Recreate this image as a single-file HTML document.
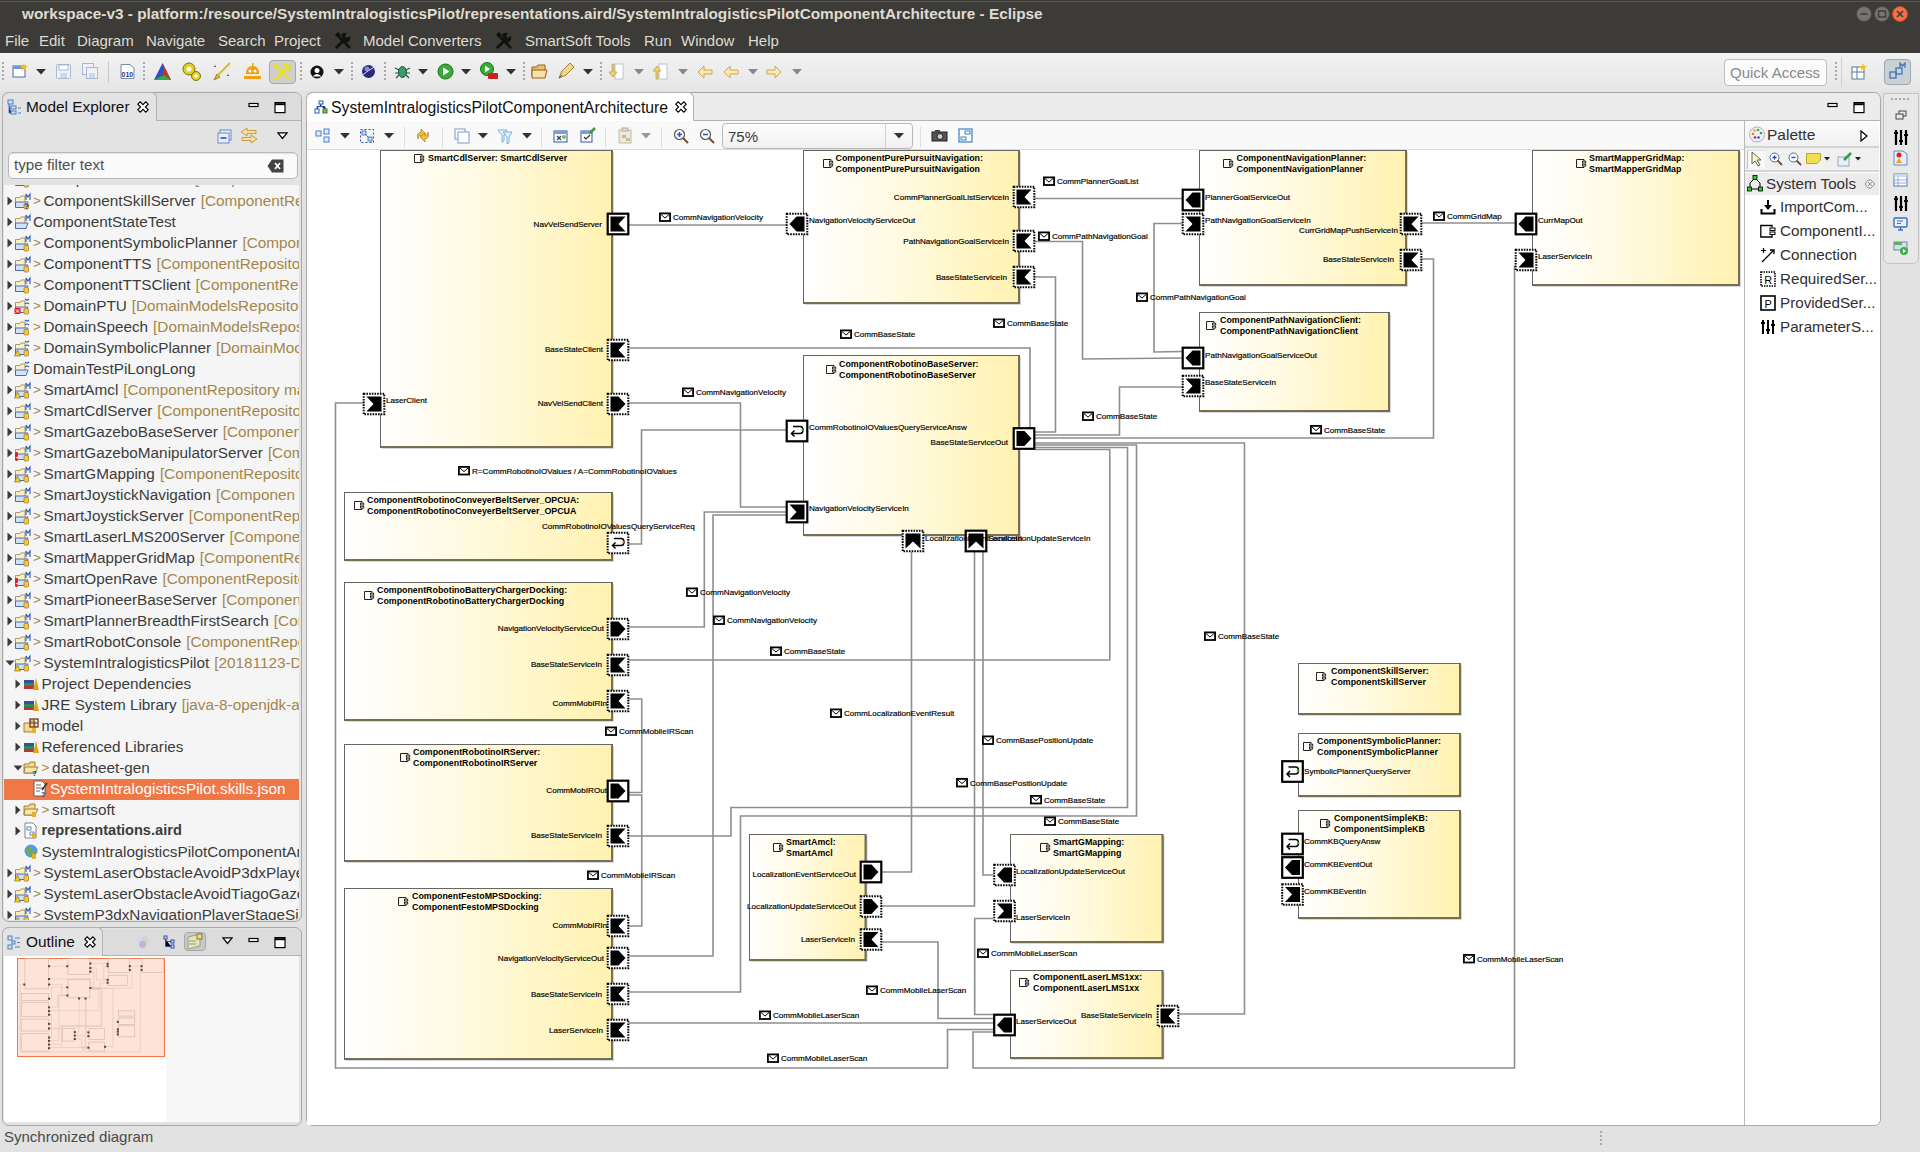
<!DOCTYPE html>
<html><head><meta charset="utf-8">
<style>
*{box-sizing:border-box;margin:0;padding:0}
html,body{width:1920px;height:1152px;overflow:hidden;background:#e2e2e2;font-family:"Liberation Sans",sans-serif;position:relative}
.a{position:absolute}
.t{position:absolute;white-space:nowrap}
</style></head><body>
<div class="a" style="left:0px;top:0px;width:1920px;height:53px;background:#3c3b37"></div>
<div class="a" style="left:0px;top:1px;width:1920px;height:1px;background:#58574f"></div>
<div class="t" style="left:22px;top:4.8px;font-size:15.35px;line-height:18.4px;color:#dfdbd2;font-weight:bold;">workspace-v3 - platform:/resource/SystemIntralogisticsPilot/representations.aird/SystemIntralogisticsPilotComponentArchitecture - Eclipse</div>
<svg class="a" style="left:1855px;top:5px;" width="60" height="18" viewBox="0 0 60 18"><circle cx="9" cy="9" r="7.5" fill="#77756f" stroke="#4a4945"/><path d="M5.5,9 H12.5" stroke="#3c3b37" stroke-width="1.6"/><circle cx="27" cy="9" r="7.5" fill="#77756f" stroke="#4a4945"/><rect x="23.5" y="6" width="7" height="6" fill="none" stroke="#3c3b37" stroke-width="1.4"/><circle cx="45" cy="9" r="7.5" fill="#f0714a" stroke="#c04a20"/><path d="M42,6 L48,12 M48,6 L42,12" stroke="#3c3b37" stroke-width="1.6"/></svg>
<div class="t" style="left:5px;top:31.5px;font-size:15px;line-height:18.0px;color:#dfdbd2;font-weight:normal;">File</div>
<div class="t" style="left:39px;top:31.5px;font-size:15px;line-height:18.0px;color:#dfdbd2;font-weight:normal;">Edit</div>
<div class="t" style="left:77px;top:31.5px;font-size:15px;line-height:18.0px;color:#dfdbd2;font-weight:normal;">Diagram</div>
<div class="t" style="left:146px;top:31.5px;font-size:15px;line-height:18.0px;color:#dfdbd2;font-weight:normal;">Navigate</div>
<div class="t" style="left:218px;top:31.5px;font-size:15px;line-height:18.0px;color:#dfdbd2;font-weight:normal;">Search</div>
<div class="t" style="left:274px;top:31.5px;font-size:15px;line-height:18.0px;color:#dfdbd2;font-weight:normal;">Project</div>
<div class="t" style="left:363px;top:31.5px;font-size:15px;line-height:18.0px;color:#dfdbd2;font-weight:normal;">Model Converters</div>
<div class="t" style="left:525px;top:31.5px;font-size:15px;line-height:18.0px;color:#dfdbd2;font-weight:normal;">SmartSoft Tools</div>
<div class="t" style="left:644px;top:31.5px;font-size:15px;line-height:18.0px;color:#dfdbd2;font-weight:normal;">Run</div>
<div class="t" style="left:681px;top:31.5px;font-size:15px;line-height:18.0px;color:#dfdbd2;font-weight:normal;">Window</div>
<div class="t" style="left:748px;top:31.5px;font-size:15px;line-height:18.0px;color:#dfdbd2;font-weight:normal;">Help</div>
<svg class="a" style="left:333px;top:31px;" width="19" height="19" viewBox="0 0 19 19"><path d="M3,17 L12,8" stroke="#111" stroke-width="3"/><path d="M8,4 Q10,1 14,2 L12,5 L14,7 L17,5 Q18,9 15,11 Q13,12 11,11Z" fill="#111"/><path d="M17,17 L6,6" stroke="#111" stroke-width="2.5"/><path d="M2,4 L5,1 L8,4 L5,7Z" fill="#111"/></svg>
<svg class="a" style="left:494px;top:31px;" width="19" height="19" viewBox="0 0 19 19"><path d="M3,17 L12,8" stroke="#111" stroke-width="3"/><path d="M8,4 Q10,1 14,2 L12,5 L14,7 L17,5 Q18,9 15,11 Q13,12 11,11Z" fill="#111"/><path d="M17,17 L6,6" stroke="#111" stroke-width="2.5"/><path d="M2,4 L5,1 L8,4 L5,7Z" fill="#111"/></svg>
<div class="a" style="left:0px;top:53px;width:1920px;height:38px;background:linear-gradient(#f2f2f2,#e6e6e6)"></div>
<div class="a" style="left:2px;top:62px;width:2px;height:20px;background:repeating-linear-gradient(#aaa 0 2px,transparent 2px 4px)"></div>
<div class="a" style="left:143px;top:62px;width:2px;height:20px;background:repeating-linear-gradient(#aaa 0 2px,transparent 2px 4px)"></div>
<div class="a" style="left:300px;top:62px;width:2px;height:20px;background:repeating-linear-gradient(#aaa 0 2px,transparent 2px 4px)"></div>
<div class="a" style="left:351px;top:62px;width:2px;height:20px;background:repeating-linear-gradient(#aaa 0 2px,transparent 2px 4px)"></div>
<div class="a" style="left:384px;top:62px;width:2px;height:20px;background:repeating-linear-gradient(#aaa 0 2px,transparent 2px 4px)"></div>
<div class="a" style="left:523px;top:62px;width:2px;height:20px;background:repeating-linear-gradient(#aaa 0 2px,transparent 2px 4px)"></div>
<div class="a" style="left:600px;top:62px;width:2px;height:20px;background:repeating-linear-gradient(#aaa 0 2px,transparent 2px 4px)"></div>
<div class="a" style="left:1835px;top:62px;width:2px;height:20px;background:repeating-linear-gradient(#aaa 0 2px,transparent 2px 4px)"></div>
<div class="a" style="left:108px;top:61px;width:1px;height:22px;background:#c8c8c8"></div>
<svg class="a" style="left:12px;top:63px;" width="16" height="16" viewBox="0 0 16 16"><rect x="1" y="3" width="12" height="11" fill="#fff" stroke="#4a6aa0"/><rect x="1" y="3" width="12" height="3" fill="#6a9ad8"/><path d="M12,0 L13,3 L16,3 L13.5,5 L14.5,8 L12,6 L9.5,8 L10.5,5 L8,3 L11,3Z" fill="#f0c020"/></svg>
<svg class="a" style="left:36px;top:69px;" width="10" height="6" viewBox="0 0 10 6"><path d="M0,0 H10 L5,5.5Z" fill="#333"/></svg>
<svg class="a" style="left:56px;top:64px;" width="15" height="15" viewBox="0 0 15 15"><rect x="0.5" y="0.5" width="14" height="14" rx="1" fill="#eef2f8" stroke="#a8b8d0"/><rect x="3" y="1" width="9" height="5" fill="#fff" stroke="#a8b8d0"/><rect x="4" y="9" width="7" height="5" fill="#d0d8e8"/></svg>
<svg class="a" style="left:82px;top:63px;" width="16" height="16" viewBox="0 0 16 16"><rect x="0.5" y="0.5" width="11" height="11" fill="#eef2f8" stroke="#a8b8d0"/><rect x="4.5" y="4.5" width="11" height="11" fill="#eef2f8" stroke="#a8b8d0"/><rect x="7" y="10" width="6" height="5" fill="#d0d8e8"/></svg>
<svg class="a" style="left:120px;top:64px;" width="15" height="15" viewBox="0 0 15 15"><path d="M1,0.5 H10 L14,4 V14.5 H1Z" fill="#fff" stroke="#7a8aa0"/><text x="1.5" y="13" font-size="7" font-weight="bold" fill="#1a3a80" font-family="Liberation Sans">010</text></svg>
<svg class="a" style="left:153px;top:62px;" width="19" height="19" viewBox="0 0 19 19"><path d="M9.5,1 L18,18 L1,18Z" fill="#3050c0"/><path d="M9.5,1 L18,18 L11,13Z" fill="#d03020"/><path d="M1,18 L18,18 L11,13Z" fill="#30b030"/></svg>
<svg class="a" style="left:181px;top:61px;" width="21" height="21" viewBox="0 0 21 21"><circle cx="8" cy="8" r="6" fill="#e0d020" stroke="#807010"/><circle cx="8" cy="8" r="2.5" fill="#fff"/><circle cx="15" cy="15" r="4.5" fill="#e0d020" stroke="#807010"/><circle cx="15" cy="15" r="1.8" fill="#fff"/></svg>
<svg class="a" style="left:211px;top:62px;" width="21" height="20" viewBox="0 0 21 20"><path d="M3,18 L6,12 L9,15Z" fill="#e0c020" stroke="#806010" stroke-width="0.7"/><path d="M7,13 L19,1" stroke="#d8c020" stroke-width="2"/><path d="M4,3 L5,5 L3,5Z M17,12 L18,14 L16,14Z" fill="#333"/></svg>
<svg class="a" style="left:242px;top:62px;" width="21" height="20" viewBox="0 0 21 20"><path d="M4,12 Q4,4 10.5,4 Q17,4 17,12Z" fill="#f0a010"/><rect x="2" y="14" width="17" height="3" fill="#f0a010"/><circle cx="8" cy="9" r="1.5" fill="#fff"/><circle cx="13" cy="9" r="1.5" fill="#fff"/><rect x="10" y="1" width="1.5" height="3" fill="#f0a010"/></svg>
<div class="a" style="left:269px;top:60px;width:27px;height:24px;background:#cfcfcf;border:1px solid #a8a8a8;border-radius:4px"></div>
<svg class="a" style="left:272px;top:62px;" width="21" height="20" viewBox="0 0 21 20"><path d="M3,18 L17,3" stroke="#e8e020" stroke-width="3"/><path d="M12,2 L19,8" stroke="#e8e020" stroke-width="3"/><path d="M3,3 L17,17" stroke="#e8e020" stroke-width="2.5"/><path d="M2,6 Q1,1 6,2 Z" fill="#e8e020"/></svg>
<svg class="a" style="left:310px;top:65px;" width="14" height="14" viewBox="0 0 14 14"><circle cx="7" cy="7" r="6.5" fill="#111"/><circle cx="7" cy="5.5" r="2.5" fill="#fff"/><path d="M2.5,11.5 Q7,6.5 11.5,11.5" fill="#fff"/></svg>
<svg class="a" style="left:334px;top:69px;" width="10" height="6" viewBox="0 0 10 6"><path d="M0,0 H10 L5,5.5Z" fill="#333"/></svg>
<svg class="a" style="left:361px;top:64px;" width="15" height="15" viewBox="0 0 15 15"><circle cx="7.5" cy="7.5" r="6.5" fill="#2a2a80"/><circle cx="6" cy="5" r="2.5" fill="#8a8ad8"/><path d="M0,12 Q8,6 15,2" stroke="#ddd" stroke-width="1"/></svg>
<svg class="a" style="left:394px;top:63px;" width="17" height="17" viewBox="0 0 17 17"><ellipse cx="8.5" cy="9" rx="4" ry="5.5" fill="#3a9a6a" stroke="#1a5a3a"/><path d="M1,5 L5,7 M16,5 L12,7 M1,10 H4.5 M16,10 H12.5 M2,15 L5,12 M15,15 L12,12" stroke="#1a5a3a" stroke-width="1.2"/></svg>
<svg class="a" style="left:418px;top:69px;" width="10" height="6" viewBox="0 0 10 6"><path d="M0,0 H10 L5,5.5Z" fill="#333"/></svg>
<svg class="a" style="left:437px;top:63px;" width="17" height="17" viewBox="0 0 17 17"><circle cx="8.5" cy="8.5" r="7.5" fill="#3aaa3a" stroke="#1a701a"/><path d="M6,4.5 L12.5,8.5 L6,12.5Z" fill="#fff"/></svg>
<svg class="a" style="left:461px;top:69px;" width="10" height="6" viewBox="0 0 10 6"><path d="M0,0 H10 L5,5.5Z" fill="#333"/></svg>
<svg class="a" style="left:480px;top:62px;" width="19" height="19" viewBox="0 0 19 19"><circle cx="7" cy="7" r="6.5" fill="#3aaa3a" stroke="#1a701a"/><path d="M5,3.5 L10,7 L5,10.5Z" fill="#fff"/><rect x="8" y="11" width="10" height="6" rx="1" fill="#d02020"/></svg>
<svg class="a" style="left:506px;top:69px;" width="10" height="6" viewBox="0 0 10 6"><path d="M0,0 H10 L5,5.5Z" fill="#333"/></svg>
<svg class="a" style="left:531px;top:64px;" width="17" height="15" viewBox="0 0 17 15"><path d="M1,3 H6 L7,1 H14 V13 H1Z" fill="#e8c070" stroke="#906020"/><path d="M1,6 H16 L14,14 H1Z" fill="#f8e0a0" stroke="#906020"/></svg>
<svg class="a" style="left:557px;top:62px;" width="18" height="18" viewBox="0 0 18 18"><path d="M2,16 L5,9 L13,1 L17,5 L9,13Z" fill="#f0d890" stroke="#a08030"/><path d="M2,16 L5,13" stroke="#555"/></svg>
<svg class="a" style="left:583px;top:69px;" width="10" height="6" viewBox="0 0 10 6"><path d="M0,0 H10 L5,5.5Z" fill="#333"/></svg>
<svg class="a" style="left:609px;top:63px;" width="15" height="17" viewBox="0 0 15 17"><rect x="6" y="1" width="8" height="15" fill="#fff" stroke="#b8c4d8"/><path d="M3,1 V9 H0 L4,14 L8,9 H5 V1Z" fill="#f0d070" stroke="#b09030" stroke-width="0.6"/></svg>
<svg class="a" style="left:634px;top:69px;" width="10" height="6" viewBox="0 0 10 6"><path d="M0,0 H10 L5,5.5Z" fill="#888"/></svg>
<svg class="a" style="left:653px;top:63px;" width="15" height="17" viewBox="0 0 15 17"><rect x="6" y="1" width="8" height="15" fill="#fff" stroke="#b8c4d8"/><path d="M3,16 V8 H0 L4,3 L8,8 H5 V16Z" fill="#f0d070" stroke="#b09030" stroke-width="0.6"/></svg>
<svg class="a" style="left:678px;top:69px;" width="10" height="6" viewBox="0 0 10 6"><path d="M0,0 H10 L5,5.5Z" fill="#888"/></svg>
<svg class="a" style="left:697px;top:65px;" width="16" height="14" viewBox="0 0 16 14"><path d="M15,5 H7 V1 L1,7 L7,13 V9 H15Z" fill="#f8e8b0" stroke="#c8a040" stroke-width="0.9"/></svg>
<svg class="a" style="left:723px;top:65px;" width="16" height="14" viewBox="0 0 16 14"><path d="M15,5 H7 V1 L1,7 L7,13 V9 H15Z" fill="#f8e8b0" stroke="#c8a040" stroke-width="0.9"/></svg>
<svg class="a" style="left:766px;top:65px;" width="16" height="14" viewBox="0 0 16 14"><path d="M1,5 H9 V1 L15,7 L9,13 V9 H1Z" fill="#f8e8b0" stroke="#c8a040" stroke-width="0.9"/></svg>
<svg class="a" style="left:748px;top:69px;" width="10" height="6" viewBox="0 0 10 6"><path d="M0,0 H10 L5,5.5Z" fill="#888"/></svg>
<svg class="a" style="left:792px;top:69px;" width="10" height="6" viewBox="0 0 10 6"><path d="M0,0 H10 L5,5.5Z" fill="#888"/></svg>
<div class="a" style="left:1724px;top:59px;width:103px;height:27px;background:#fbfbfb;border:1px solid #bdbdbd;border-radius:4px"></div>
<div class="t" style="left:1730px;top:63.5px;font-size:15px;line-height:18.0px;color:#8a8a8a;font-weight:normal;">Quick Access</div>
<div class="a" style="left:1841px;top:57px;width:1px;height:30px;background:#d0d0d0"></div>
<svg class="a" style="left:1851px;top:63px;" width="17" height="17" viewBox="0 0 17 17"><rect x="1" y="4" width="12" height="12" fill="#fff" stroke="#5a7aa0"/><path d="M1,9 H13 M6,4 V16" stroke="#5a7aa0"/><path d="M12,0 L13,3 L16,3 L13.5,5 L14.5,8 L12,6 L9.5,8 L10.5,5 L8,3 L11,3Z" fill="#f0c020"/></svg>
<div class="a" style="left:1884px;top:59px;width:27px;height:26px;background:#c8d0d8;border:1px solid #a0a8b0;border-radius:4px"></div>
<svg class="a" style="left:1888px;top:62px;" width="20" height="20" viewBox="0 0 20 20"><rect x="2" y="10" width="6" height="6" fill="none" stroke="#3a70b0" stroke-width="1.2"/><rect x="8" y="6" width="6" height="6" fill="none" stroke="#3a70b0" stroke-width="1.2"/><path d="M12,6 V1 L14.5,4 L17,1 V6" fill="none" stroke="#3a70b0" stroke-width="1.2"/></svg>
<div class="a" style="left:2px;top:92px;width:300px;height:830px;background:#e3e3e3;border:1px solid #a8a8a8;border-radius:7px 7px 7px 7px"></div>
<div class="a" style="left:148px;top:93px;width:153px;height:28px;background:#dcdcdc;border-bottom:1px solid #b4b4b4;border-top-right-radius:6px"></div>
<div class="a" style="left:2px;top:92px;width:155px;height:29px;background:#e3e3e3;border:1px solid #b4b4b4;border-bottom:none;border-left:1px solid #b4b4b4;border-radius:7px 6px 0 0"></div>
<svg class="a" style="left:7px;top:99px;" width="15" height="16" viewBox="0 0 15 16"><rect x="1" y="1" width="5" height="4" fill="#cfe0f5" stroke="#4a80c0"/><rect x="4" y="7" width="5" height="3" fill="#cfe0f5" stroke="#4a80c0"/><rect x="4" y="12" width="5" height="3" fill="#cfe0f5" stroke="#4a80c0"/><path d="M2,5 V14 H4 M2,9 H4 M11,9 H14 M11,14 H14" stroke="#4a80c0"/></svg>
<div class="t" style="left:26px;top:97.8px;font-size:15.4px;line-height:18.5px;color:#101010;font-weight:normal;">Model Explorer</div>
<svg class="a" style="left:137px;top:101px;" width="12" height="12" viewBox="0 0 12 12"><path d="M0.8,3.2 L3.2,0.8 L6,3.6 L8.8,0.8 L11.2,3.2 L8.4,6 L11.2,8.8 L8.8,11.2 L6,8.4 L3.2,11.2 L0.8,8.8 L3.6,6Z" fill="#fff" stroke="#000" stroke-width="1.1"/></svg>
<svg class="a" style="left:248px;top:102px;" width="40" height="12" viewBox="0 0 40 12"><rect x="1" y="1.5" width="9" height="3" fill="#fff" stroke="#000" stroke-width="1.2"/><rect x="27" y="0.6" width="10" height="10" fill="#fff" stroke="#000" stroke-width="1.2"/><path d="M27,2.2 H37" stroke="#000" stroke-width="2"/></svg>
<svg class="a" style="left:217px;top:129px;" width="15" height="15" viewBox="0 0 15 15"><rect x="3" y="1" width="11" height="10" fill="#e8eef8" stroke="#6a8ac8"/><rect x="1" y="4" width="11" height="10" fill="#e8eef8" stroke="#6a8ac8"/><path d="M3.5,9 H9.5" stroke="#1a4ab0" stroke-width="1.5"/></svg>
<svg class="a" style="left:240px;top:127px;" width="18" height="17" viewBox="0 0 18 17"><path d="M7,1 L1,5 L7,9 V6.5 H16 V3.5 H7Z" fill="#f8e0a0" stroke="#c89030" stroke-width="0.9"/><path d="M11,8 L17,12 L11,16 V13.5 H2 V10.5 H11Z" fill="#f8e0a0" stroke="#c89030" stroke-width="0.9"/></svg>
<svg class="a" style="left:277px;top:132px;" width="11" height="8" viewBox="0 0 11 8"><path d="M0.8,0.8 H10.2 L5.5,6.5Z" fill="#fff" stroke="#000" stroke-width="1.3"/></svg>
<div class="a" style="left:8px;top:152px;width:290px;height:27px;background:#fafafa;border:1px solid #b8b8b8;border-radius:5px;box-shadow:inset 0 1px 1px #e0e0e0"></div>
<div class="t" style="left:14px;top:156.4px;font-size:15.2px;line-height:18.2px;color:#505050;font-weight:normal;">type filter text</div>
<svg class="a" style="left:267px;top:159px;" width="17" height="14" viewBox="0 0 17 14"><path d="M5,0.5 H16.5 V13.5 H5 L0.5,7Z" fill="#444"/><path d="M8,4 L13,10 M13,4 L8,10" stroke="#fff" stroke-width="1.8"/></svg>
<div class="a" style="left:4px;top:185px;width:295px;height:735px;background:#f5f5f5;border-radius:0 0 5px 5px"></div>
<div class="a" style="left:4px;top:185px;width:295px;height:735px;overflow:hidden;border-radius:0 0 5px 5px"><svg class="a" style="left:2.5px;top:-11px;" width="6" height="10" viewBox="0 0 6 10"><path d="M0.5,0.5 L5.5,5 L0.5,9.5Z" fill="#3a3a3a"/></svg>
<svg class="a" style="left:10px;top:-15px;" width="18" height="18" viewBox="0 0 18 18"><path d="M1.5,5.5 H6 L7,4 H11 V15 H1.5Z" fill="#faf0c8" stroke="#9a8050" stroke-width="0.8"/><path d="M1.5,10 H14 L12,15.5 H1.5Z" fill="#d2e2f8" stroke="#3a60b0" stroke-width="0.9"/><path d="M12,2 V8 M12,2 L14,5 L16,2 V8" fill="none" stroke="#2a5aa8" stroke-width="1.1"/><rect x="10" y="11.5" width="4.5" height="5.5" rx="1" fill="#f4c840" stroke="#a07010" stroke-width="0.7"/></svg>
<div class="t" style="left:29px;top:-14.1px;font-size:13.5px;line-height:16.2px;color:#a4854a;font-weight:normal;">&gt;</div>
<div class="t" style="left:39.5px;top:-15.2px;font-size:15.3px;line-height:18.4px;color:#3c3c3c;font-weight:normal;">ComponentSkillClient</div>
<div class="t" style="left:190.76321875000002px;top:-15.2px;font-size:15.3px;line-height:18.4px;color:#a4854a;font-weight:normal;">[ComponentRe</div>
<svg class="a" style="left:2.5px;top:11px;" width="6" height="10" viewBox="0 0 6 10"><path d="M0.5,0.5 L5.5,5 L0.5,9.5Z" fill="#3a3a3a"/></svg>
<svg class="a" style="left:10px;top:7px;" width="18" height="18" viewBox="0 0 18 18"><path d="M1.5,5.5 H6 L7,4 H11 V15 H1.5Z" fill="#faf0c8" stroke="#9a8050" stroke-width="0.8"/><path d="M1.5,10 H14 L12,15.5 H1.5Z" fill="#d2e2f8" stroke="#3a60b0" stroke-width="0.9"/><path d="M12,2 V8 M12,2 L14,5 L16,2 V8" fill="none" stroke="#2a5aa8" stroke-width="1.1"/><rect x="10" y="11.5" width="4.5" height="5.5" rx="1" fill="#f4c840" stroke="#a07010" stroke-width="0.7"/><text x="10" y="17" font-size="8" font-weight="bold" fill="#2030a0" font-family="Liberation Sans">?</text></svg>
<div class="t" style="left:29px;top:7.9px;font-size:13.5px;line-height:16.2px;color:#a4854a;font-weight:normal;">&gt;</div>
<div class="t" style="left:39.5px;top:6.8px;font-size:15.3px;line-height:18.4px;color:#3c3c3c;font-weight:normal;">ComponentSkillServer</div>
<div class="t" style="left:196.70870312500003px;top:6.8px;font-size:15.3px;line-height:18.4px;color:#a4854a;font-weight:normal;">[ComponentRe</div>
<svg class="a" style="left:2.5px;top:32px;" width="6" height="10" viewBox="0 0 6 10"><path d="M0.5,0.5 L5.5,5 L0.5,9.5Z" fill="#3a3a3a"/></svg>
<svg class="a" style="left:10px;top:28px;" width="18" height="18" viewBox="0 0 18 18"><path d="M1.5,5.5 H6 L7,4 H11 V15 H1.5Z" fill="#faf0c8" stroke="#9a8050" stroke-width="0.8"/><path d="M1.5,10 H14 L12,15.5 H1.5Z" fill="#d2e2f8" stroke="#3a60b0" stroke-width="0.9"/><path d="M12,2 V8 M12,2 L14,5 L16,2 V8" fill="none" stroke="#2a5aa8" stroke-width="1.1"/></svg>
<div class="t" style="left:29px;top:27.8px;font-size:15.3px;line-height:18.4px;color:#3c3c3c;font-weight:normal;">ComponentStateTest</div>
<svg class="a" style="left:2.5px;top:53px;" width="6" height="10" viewBox="0 0 6 10"><path d="M0.5,0.5 L5.5,5 L0.5,9.5Z" fill="#3a3a3a"/></svg>
<svg class="a" style="left:10px;top:49px;" width="18" height="18" viewBox="0 0 18 18"><path d="M1.5,5.5 H6 L7,4 H11 V15 H1.5Z" fill="#faf0c8" stroke="#9a8050" stroke-width="0.8"/><path d="M1.5,10 H14 L12,15.5 H1.5Z" fill="#d2e2f8" stroke="#3a60b0" stroke-width="0.9"/><path d="M12,2 V8 M12,2 L14,5 L16,2 V8" fill="none" stroke="#2a5aa8" stroke-width="1.1"/><rect x="10" y="11.5" width="4.5" height="5.5" rx="1" fill="#f4c840" stroke="#a07010" stroke-width="0.7"/></svg>
<div class="t" style="left:29px;top:49.9px;font-size:13.5px;line-height:16.2px;color:#a4854a;font-weight:normal;">&gt;</div>
<div class="t" style="left:39.5px;top:48.8px;font-size:15.3px;line-height:18.4px;color:#3c3c3c;font-weight:normal;">ComponentSymbolicPlanner</div>
<div class="t" style="left:238.391640625px;top:48.8px;font-size:15.3px;line-height:18.4px;color:#a4854a;font-weight:normal;">[Compor</div>
<svg class="a" style="left:2.5px;top:74px;" width="6" height="10" viewBox="0 0 6 10"><path d="M0.5,0.5 L5.5,5 L0.5,9.5Z" fill="#3a3a3a"/></svg>
<svg class="a" style="left:10px;top:70px;" width="18" height="18" viewBox="0 0 18 18"><path d="M1.5,5.5 H6 L7,4 H11 V15 H1.5Z" fill="#faf0c8" stroke="#9a8050" stroke-width="0.8"/><path d="M1.5,10 H14 L12,15.5 H1.5Z" fill="#d2e2f8" stroke="#3a60b0" stroke-width="0.9"/><path d="M12,2 V8 M12,2 L14,5 L16,2 V8" fill="none" stroke="#2a5aa8" stroke-width="1.1"/><rect x="10" y="11.5" width="4.5" height="5.5" rx="1" fill="#f4c840" stroke="#a07010" stroke-width="0.7"/></svg>
<div class="t" style="left:29px;top:70.9px;font-size:13.5px;line-height:16.2px;color:#a4854a;font-weight:normal;">&gt;</div>
<div class="t" style="left:39.5px;top:69.8px;font-size:15.3px;line-height:18.4px;color:#3c3c3c;font-weight:normal;">ComponentTTS</div>
<div class="t" style="left:152.4893125px;top:69.8px;font-size:15.3px;line-height:18.4px;color:#a4854a;font-weight:normal;">[ComponentReposito</div>
<svg class="a" style="left:2.5px;top:95px;" width="6" height="10" viewBox="0 0 6 10"><path d="M0.5,0.5 L5.5,5 L0.5,9.5Z" fill="#3a3a3a"/></svg>
<svg class="a" style="left:10px;top:91px;" width="18" height="18" viewBox="0 0 18 18"><path d="M1.5,5.5 H6 L7,4 H11 V15 H1.5Z" fill="#faf0c8" stroke="#9a8050" stroke-width="0.8"/><path d="M1.5,10 H14 L12,15.5 H1.5Z" fill="#d2e2f8" stroke="#3a60b0" stroke-width="0.9"/><path d="M12,2 V8 M12,2 L14,5 L16,2 V8" fill="none" stroke="#2a5aa8" stroke-width="1.1"/><rect x="10" y="11.5" width="4.5" height="5.5" rx="1" fill="#f4c840" stroke="#a07010" stroke-width="0.7"/></svg>
<div class="t" style="left:29px;top:91.9px;font-size:13.5px;line-height:16.2px;color:#a4854a;font-weight:normal;">&gt;</div>
<div class="t" style="left:39.5px;top:90.8px;font-size:15.3px;line-height:18.4px;color:#3c3c3c;font-weight:normal;">ComponentTTSClient</div>
<div class="t" style="left:191.60471875000002px;top:90.8px;font-size:15.3px;line-height:18.4px;color:#a4854a;font-weight:normal;">[ComponentRep</div>
<svg class="a" style="left:2.5px;top:116px;" width="6" height="10" viewBox="0 0 6 10"><path d="M0.5,0.5 L5.5,5 L0.5,9.5Z" fill="#3a3a3a"/></svg>
<svg class="a" style="left:10px;top:112px;" width="18" height="18" viewBox="0 0 18 18"><path d="M1.5,5.5 H6 L7,4 H11 V15 H1.5Z" fill="#faf0c8" stroke="#9a8050" stroke-width="0.8"/><path d="M1.5,10 H14 L12,15.5 H1.5Z" fill="#d2e2f8" stroke="#3a60b0" stroke-width="0.9"/><path d="M11,2 Q13,4 15,2 M11,7 Q13,5 15,7" fill="none" stroke="#2a5aa8" stroke-width="1.1"/><rect x="10" y="11.5" width="4.5" height="5.5" rx="1" fill="#f4c840" stroke="#a07010" stroke-width="0.7"/><rect x="0.5" y="11" width="6" height="6" fill="#e02020"/><path d="M1.8,12.3 L5.2,15.7 M5.2,12.3 L1.8,15.7" stroke="#fff" stroke-width="1"/></svg>
<div class="t" style="left:29px;top:112.9px;font-size:13.5px;line-height:16.2px;color:#a4854a;font-weight:normal;">&gt;</div>
<div class="t" style="left:39.5px;top:111.8px;font-size:15.3px;line-height:18.4px;color:#3c3c3c;font-weight:normal;">DomainPTU</div>
<div class="t" style="left:127.8180625px;top:111.8px;font-size:15.3px;line-height:18.4px;color:#a4854a;font-weight:normal;">[DomainModelsReposito</div>
<svg class="a" style="left:2.5px;top:137px;" width="6" height="10" viewBox="0 0 6 10"><path d="M0.5,0.5 L5.5,5 L0.5,9.5Z" fill="#3a3a3a"/></svg>
<svg class="a" style="left:10px;top:133px;" width="18" height="18" viewBox="0 0 18 18"><path d="M1.5,5.5 H6 L7,4 H11 V15 H1.5Z" fill="#faf0c8" stroke="#9a8050" stroke-width="0.8"/><path d="M1.5,10 H14 L12,15.5 H1.5Z" fill="#d2e2f8" stroke="#3a60b0" stroke-width="0.9"/><path d="M11,2 Q13,4 15,2 M11,7 Q13,5 15,7" fill="none" stroke="#2a5aa8" stroke-width="1.1"/><rect x="10" y="11.5" width="4.5" height="5.5" rx="1" fill="#f4c840" stroke="#a07010" stroke-width="0.7"/></svg>
<div class="t" style="left:29px;top:133.9px;font-size:13.5px;line-height:16.2px;color:#a4854a;font-weight:normal;">&gt;</div>
<div class="t" style="left:39.5px;top:132.8px;font-size:15.3px;line-height:18.4px;color:#3c3c3c;font-weight:normal;">DomainSpeech</div>
<div class="t" style="left:149.106578125px;top:132.8px;font-size:15.3px;line-height:18.4px;color:#a4854a;font-weight:normal;">[DomainModelsRepos</div>
<svg class="a" style="left:2.5px;top:158px;" width="6" height="10" viewBox="0 0 6 10"><path d="M0.5,0.5 L5.5,5 L0.5,9.5Z" fill="#3a3a3a"/></svg>
<svg class="a" style="left:10px;top:154px;" width="18" height="18" viewBox="0 0 18 18"><path d="M1.5,5.5 H6 L7,4 H11 V15 H1.5Z" fill="#faf0c8" stroke="#9a8050" stroke-width="0.8"/><path d="M1.5,10 H14 L12,15.5 H1.5Z" fill="#d2e2f8" stroke="#3a60b0" stroke-width="0.9"/><path d="M11,2 Q13,4 15,2 M11,7 Q13,5 15,7" fill="none" stroke="#2a5aa8" stroke-width="1.1"/><rect x="10" y="11.5" width="4.5" height="5.5" rx="1" fill="#f4c840" stroke="#a07010" stroke-width="0.7"/><path d="M3.5,11 L6.5,17 H0.5Z" fill="#f8d020" stroke="#806000" stroke-width="0.6"/></svg>
<div class="t" style="left:29px;top:154.9px;font-size:13.5px;line-height:16.2px;color:#a4854a;font-weight:normal;">&gt;</div>
<div class="t" style="left:39.5px;top:153.8px;font-size:15.3px;line-height:18.4px;color:#3c3c3c;font-weight:normal;">DomainSymbolicPlanner</div>
<div class="t" style="left:212.01587500000002px;top:153.8px;font-size:15.3px;line-height:18.4px;color:#a4854a;font-weight:normal;">[DomainMoc</div>
<svg class="a" style="left:2.5px;top:179px;" width="6" height="10" viewBox="0 0 6 10"><path d="M0.5,0.5 L5.5,5 L0.5,9.5Z" fill="#3a3a3a"/></svg>
<svg class="a" style="left:10px;top:175px;" width="18" height="18" viewBox="0 0 18 18"><path d="M1.5,5.5 H6 L7,4 H11 V15 H1.5Z" fill="#faf0c8" stroke="#9a8050" stroke-width="0.8"/><path d="M1.5,10 H14 L12,15.5 H1.5Z" fill="#d2e2f8" stroke="#3a60b0" stroke-width="0.9"/><path d="M11,2 Q13,4 15,2 M11,7 Q13,5 15,7" fill="none" stroke="#2a5aa8" stroke-width="1.1"/></svg>
<div class="t" style="left:29px;top:174.8px;font-size:15.3px;line-height:18.4px;color:#3c3c3c;font-weight:normal;">DomainTestPiLongLong</div>
<svg class="a" style="left:2.5px;top:200px;" width="6" height="10" viewBox="0 0 6 10"><path d="M0.5,0.5 L5.5,5 L0.5,9.5Z" fill="#3a3a3a"/></svg>
<svg class="a" style="left:10px;top:196px;" width="18" height="18" viewBox="0 0 18 18"><path d="M1.5,5.5 H6 L7,4 H11 V15 H1.5Z" fill="#faf0c8" stroke="#9a8050" stroke-width="0.8"/><path d="M1.5,10 H14 L12,15.5 H1.5Z" fill="#d2e2f8" stroke="#3a60b0" stroke-width="0.9"/><path d="M12,2 V8 M12,2 L14,5 L16,2 V8" fill="none" stroke="#2a5aa8" stroke-width="1.1"/><rect x="10" y="11.5" width="4.5" height="5.5" rx="1" fill="#f4c840" stroke="#a07010" stroke-width="0.7"/><path d="M3.5,11 L6.5,17 H0.5Z" fill="#f8d020" stroke="#806000" stroke-width="0.6"/></svg>
<div class="t" style="left:29px;top:196.9px;font-size:13.5px;line-height:16.2px;color:#a4854a;font-weight:normal;">&gt;</div>
<div class="t" style="left:39.5px;top:195.8px;font-size:15.3px;line-height:18.4px;color:#3c3c3c;font-weight:normal;">SmartAmcl</div>
<div class="t" style="left:119.30265625px;top:195.8px;font-size:15.3px;line-height:18.4px;color:#a4854a;font-weight:normal;">[ComponentRepository ma</div>
<svg class="a" style="left:2.5px;top:221px;" width="6" height="10" viewBox="0 0 6 10"><path d="M0.5,0.5 L5.5,5 L0.5,9.5Z" fill="#3a3a3a"/></svg>
<svg class="a" style="left:10px;top:217px;" width="18" height="18" viewBox="0 0 18 18"><path d="M1.5,5.5 H6 L7,4 H11 V15 H1.5Z" fill="#faf0c8" stroke="#9a8050" stroke-width="0.8"/><path d="M1.5,10 H14 L12,15.5 H1.5Z" fill="#d2e2f8" stroke="#3a60b0" stroke-width="0.9"/><path d="M12,2 V8 M12,2 L14,5 L16,2 V8" fill="none" stroke="#2a5aa8" stroke-width="1.1"/><rect x="10" y="11.5" width="4.5" height="5.5" rx="1" fill="#f4c840" stroke="#a07010" stroke-width="0.7"/></svg>
<div class="t" style="left:29px;top:217.9px;font-size:13.5px;line-height:16.2px;color:#a4854a;font-weight:normal;">&gt;</div>
<div class="t" style="left:39.5px;top:216.8px;font-size:15.3px;line-height:18.4px;color:#3c3c3c;font-weight:normal;">SmartCdlServer</div>
<div class="t" style="left:153.32125000000002px;top:216.8px;font-size:15.3px;line-height:18.4px;color:#a4854a;font-weight:normal;">[ComponentReposito</div>
<svg class="a" style="left:2.5px;top:242px;" width="6" height="10" viewBox="0 0 6 10"><path d="M0.5,0.5 L5.5,5 L0.5,9.5Z" fill="#3a3a3a"/></svg>
<svg class="a" style="left:10px;top:238px;" width="18" height="18" viewBox="0 0 18 18"><path d="M1.5,5.5 H6 L7,4 H11 V15 H1.5Z" fill="#faf0c8" stroke="#9a8050" stroke-width="0.8"/><path d="M1.5,10 H14 L12,15.5 H1.5Z" fill="#d2e2f8" stroke="#3a60b0" stroke-width="0.9"/><path d="M12,2 V8 M12,2 L14,5 L16,2 V8" fill="none" stroke="#2a5aa8" stroke-width="1.1"/><rect x="10" y="11.5" width="4.5" height="5.5" rx="1" fill="#f4c840" stroke="#a07010" stroke-width="0.7"/></svg>
<div class="t" style="left:29px;top:238.9px;font-size:13.5px;line-height:16.2px;color:#a4854a;font-weight:normal;">&gt;</div>
<div class="t" style="left:39.5px;top:237.8px;font-size:15.3px;line-height:18.4px;color:#3c3c3c;font-weight:normal;">SmartGazeboBaseServer</div>
<div class="t" style="left:218.81959375px;top:237.8px;font-size:15.3px;line-height:18.4px;color:#a4854a;font-weight:normal;">[Component</div>
<svg class="a" style="left:2.5px;top:263px;" width="6" height="10" viewBox="0 0 6 10"><path d="M0.5,0.5 L5.5,5 L0.5,9.5Z" fill="#3a3a3a"/></svg>
<svg class="a" style="left:10px;top:259px;" width="18" height="18" viewBox="0 0 18 18"><path d="M1.5,5.5 H6 L7,4 H11 V15 H1.5Z" fill="#faf0c8" stroke="#9a8050" stroke-width="0.8"/><path d="M1.5,10 H14 L12,15.5 H1.5Z" fill="#d2e2f8" stroke="#3a60b0" stroke-width="0.9"/><path d="M12,2 V8 M12,2 L14,5 L16,2 V8" fill="none" stroke="#2a5aa8" stroke-width="1.1"/><rect x="10" y="11.5" width="4.5" height="5.5" rx="1" fill="#f4c840" stroke="#a07010" stroke-width="0.7"/><rect x="1" y="8" width="3" height="5" rx="1.2" fill="#e02020"/><circle cx="2.5" cy="15.5" r="1.5" fill="#e02020"/></svg>
<div class="t" style="left:29px;top:259.9px;font-size:13.5px;line-height:16.2px;color:#a4854a;font-weight:normal;">&gt;</div>
<div class="t" style="left:39.5px;top:258.8px;font-size:15.3px;line-height:18.4px;color:#3c3c3c;font-weight:normal;">SmartGazeboManipulatorServer</div>
<div class="t" style="left:263.885265625px;top:258.8px;font-size:15.3px;line-height:18.4px;color:#a4854a;font-weight:normal;">[Com</div>
<svg class="a" style="left:2.5px;top:284px;" width="6" height="10" viewBox="0 0 6 10"><path d="M0.5,0.5 L5.5,5 L0.5,9.5Z" fill="#3a3a3a"/></svg>
<svg class="a" style="left:10px;top:280px;" width="18" height="18" viewBox="0 0 18 18"><path d="M1.5,5.5 H6 L7,4 H11 V15 H1.5Z" fill="#faf0c8" stroke="#9a8050" stroke-width="0.8"/><path d="M1.5,10 H14 L12,15.5 H1.5Z" fill="#d2e2f8" stroke="#3a60b0" stroke-width="0.9"/><path d="M12,2 V8 M12,2 L14,5 L16,2 V8" fill="none" stroke="#2a5aa8" stroke-width="1.1"/><rect x="10" y="11.5" width="4.5" height="5.5" rx="1" fill="#f4c840" stroke="#a07010" stroke-width="0.7"/><path d="M3.5,11 L6.5,17 H0.5Z" fill="#f8d020" stroke="#806000" stroke-width="0.6"/></svg>
<div class="t" style="left:29px;top:280.9px;font-size:13.5px;line-height:16.2px;color:#a4854a;font-weight:normal;">&gt;</div>
<div class="t" style="left:39.5px;top:279.8px;font-size:15.3px;line-height:18.4px;color:#3c3c3c;font-weight:normal;">SmartGMapping</div>
<div class="t" style="left:155.88878125000002px;top:279.8px;font-size:15.3px;line-height:18.4px;color:#a4854a;font-weight:normal;">[ComponentReposito</div>
<svg class="a" style="left:2.5px;top:305px;" width="6" height="10" viewBox="0 0 6 10"><path d="M0.5,0.5 L5.5,5 L0.5,9.5Z" fill="#3a3a3a"/></svg>
<svg class="a" style="left:10px;top:301px;" width="18" height="18" viewBox="0 0 18 18"><path d="M1.5,5.5 H6 L7,4 H11 V15 H1.5Z" fill="#faf0c8" stroke="#9a8050" stroke-width="0.8"/><path d="M1.5,10 H14 L12,15.5 H1.5Z" fill="#d2e2f8" stroke="#3a60b0" stroke-width="0.9"/><path d="M12,2 V8 M12,2 L14,5 L16,2 V8" fill="none" stroke="#2a5aa8" stroke-width="1.1"/><rect x="10" y="11.5" width="4.5" height="5.5" rx="1" fill="#f4c840" stroke="#a07010" stroke-width="0.7"/></svg>
<div class="t" style="left:29px;top:301.9px;font-size:13.5px;line-height:16.2px;color:#a4854a;font-weight:normal;">&gt;</div>
<div class="t" style="left:39.5px;top:300.8px;font-size:15.3px;line-height:18.4px;color:#3c3c3c;font-weight:normal;">SmartJoystickNavigation</div>
<div class="t" style="left:212.00153125px;top:300.8px;font-size:15.3px;line-height:18.4px;color:#a4854a;font-weight:normal;">[Componen</div>
<svg class="a" style="left:2.5px;top:326px;" width="6" height="10" viewBox="0 0 6 10"><path d="M0.5,0.5 L5.5,5 L0.5,9.5Z" fill="#3a3a3a"/></svg>
<svg class="a" style="left:10px;top:322px;" width="18" height="18" viewBox="0 0 18 18"><path d="M1.5,5.5 H6 L7,4 H11 V15 H1.5Z" fill="#faf0c8" stroke="#9a8050" stroke-width="0.8"/><path d="M1.5,10 H14 L12,15.5 H1.5Z" fill="#d2e2f8" stroke="#3a60b0" stroke-width="0.9"/><path d="M12,2 V8 M12,2 L14,5 L16,2 V8" fill="none" stroke="#2a5aa8" stroke-width="1.1"/><rect x="10" y="11.5" width="4.5" height="5.5" rx="1" fill="#f4c840" stroke="#a07010" stroke-width="0.7"/></svg>
<div class="t" style="left:29px;top:322.9px;font-size:13.5px;line-height:16.2px;color:#a4854a;font-weight:normal;">&gt;</div>
<div class="t" style="left:39.5px;top:321.8px;font-size:15.3px;line-height:18.4px;color:#3c3c3c;font-weight:normal;">SmartJoystickServer</div>
<div class="t" style="left:184.7723125px;top:321.8px;font-size:15.3px;line-height:18.4px;color:#a4854a;font-weight:normal;">[ComponentRep</div>
<svg class="a" style="left:2.5px;top:347px;" width="6" height="10" viewBox="0 0 6 10"><path d="M0.5,0.5 L5.5,5 L0.5,9.5Z" fill="#3a3a3a"/></svg>
<svg class="a" style="left:10px;top:343px;" width="18" height="18" viewBox="0 0 18 18"><path d="M1.5,5.5 H6 L7,4 H11 V15 H1.5Z" fill="#faf0c8" stroke="#9a8050" stroke-width="0.8"/><path d="M1.5,10 H14 L12,15.5 H1.5Z" fill="#d2e2f8" stroke="#3a60b0" stroke-width="0.9"/><path d="M12,2 V8 M12,2 L14,5 L16,2 V8" fill="none" stroke="#2a5aa8" stroke-width="1.1"/><rect x="10" y="11.5" width="4.5" height="5.5" rx="1" fill="#f4c840" stroke="#a07010" stroke-width="0.7"/></svg>
<div class="t" style="left:29px;top:343.9px;font-size:13.5px;line-height:16.2px;color:#a4854a;font-weight:normal;">&gt;</div>
<div class="t" style="left:39.5px;top:342.8px;font-size:15.3px;line-height:18.4px;color:#3c3c3c;font-weight:normal;">SmartLaserLMS200Server</div>
<div class="t" style="left:225.616140625px;top:342.8px;font-size:15.3px;line-height:18.4px;color:#a4854a;font-weight:normal;">[Componen</div>
<svg class="a" style="left:2.5px;top:368px;" width="6" height="10" viewBox="0 0 6 10"><path d="M0.5,0.5 L5.5,5 L0.5,9.5Z" fill="#3a3a3a"/></svg>
<svg class="a" style="left:10px;top:364px;" width="18" height="18" viewBox="0 0 18 18"><path d="M1.5,5.5 H6 L7,4 H11 V15 H1.5Z" fill="#faf0c8" stroke="#9a8050" stroke-width="0.8"/><path d="M1.5,10 H14 L12,15.5 H1.5Z" fill="#d2e2f8" stroke="#3a60b0" stroke-width="0.9"/><path d="M12,2 V8 M12,2 L14,5 L16,2 V8" fill="none" stroke="#2a5aa8" stroke-width="1.1"/><rect x="10" y="11.5" width="4.5" height="5.5" rx="1" fill="#f4c840" stroke="#a07010" stroke-width="0.7"/></svg>
<div class="t" style="left:29px;top:364.9px;font-size:13.5px;line-height:16.2px;color:#a4854a;font-weight:normal;">&gt;</div>
<div class="t" style="left:39.5px;top:363.8px;font-size:15.3px;line-height:18.4px;color:#3c3c3c;font-weight:normal;">SmartMapperGridMap</div>
<div class="t" style="left:195.83851562499999px;top:363.8px;font-size:15.3px;line-height:18.4px;color:#a4854a;font-weight:normal;">[ComponentRe</div>
<svg class="a" style="left:2.5px;top:389px;" width="6" height="10" viewBox="0 0 6 10"><path d="M0.5,0.5 L5.5,5 L0.5,9.5Z" fill="#3a3a3a"/></svg>
<svg class="a" style="left:10px;top:385px;" width="18" height="18" viewBox="0 0 18 18"><path d="M1.5,5.5 H6 L7,4 H11 V15 H1.5Z" fill="#faf0c8" stroke="#9a8050" stroke-width="0.8"/><path d="M1.5,10 H14 L12,15.5 H1.5Z" fill="#d2e2f8" stroke="#3a60b0" stroke-width="0.9"/><path d="M12,2 V8 M12,2 L14,5 L16,2 V8" fill="none" stroke="#2a5aa8" stroke-width="1.1"/><rect x="10" y="11.5" width="4.5" height="5.5" rx="1" fill="#f4c840" stroke="#a07010" stroke-width="0.7"/><rect x="1" y="8" width="3" height="5" rx="1.2" fill="#e02020"/><circle cx="2.5" cy="15.5" r="1.5" fill="#e02020"/></svg>
<div class="t" style="left:29px;top:385.9px;font-size:13.5px;line-height:16.2px;color:#a4854a;font-weight:normal;">&gt;</div>
<div class="t" style="left:39.5px;top:384.8px;font-size:15.3px;line-height:18.4px;color:#3c3c3c;font-weight:normal;">SmartOpenRave</div>
<div class="t" style="left:158.444359375px;top:384.8px;font-size:15.3px;line-height:18.4px;color:#a4854a;font-weight:normal;">[ComponentReposito</div>
<svg class="a" style="left:2.5px;top:410px;" width="6" height="10" viewBox="0 0 6 10"><path d="M0.5,0.5 L5.5,5 L0.5,9.5Z" fill="#3a3a3a"/></svg>
<svg class="a" style="left:10px;top:406px;" width="18" height="18" viewBox="0 0 18 18"><path d="M1.5,5.5 H6 L7,4 H11 V15 H1.5Z" fill="#faf0c8" stroke="#9a8050" stroke-width="0.8"/><path d="M1.5,10 H14 L12,15.5 H1.5Z" fill="#d2e2f8" stroke="#3a60b0" stroke-width="0.9"/><path d="M12,2 V8 M12,2 L14,5 L16,2 V8" fill="none" stroke="#2a5aa8" stroke-width="1.1"/><rect x="10" y="11.5" width="4.5" height="5.5" rx="1" fill="#f4c840" stroke="#a07010" stroke-width="0.7"/></svg>
<div class="t" style="left:29px;top:406.9px;font-size:13.5px;line-height:16.2px;color:#a4854a;font-weight:normal;">&gt;</div>
<div class="t" style="left:39.5px;top:405.8px;font-size:15.3px;line-height:18.4px;color:#3c3c3c;font-weight:normal;">SmartPioneerBaseServer</div>
<div class="t" style="left:217.96853125px;top:405.8px;font-size:15.3px;line-height:18.4px;color:#a4854a;font-weight:normal;">[Component</div>
<svg class="a" style="left:2.5px;top:431px;" width="6" height="10" viewBox="0 0 6 10"><path d="M0.5,0.5 L5.5,5 L0.5,9.5Z" fill="#3a3a3a"/></svg>
<svg class="a" style="left:10px;top:427px;" width="18" height="18" viewBox="0 0 18 18"><path d="M1.5,5.5 H6 L7,4 H11 V15 H1.5Z" fill="#faf0c8" stroke="#9a8050" stroke-width="0.8"/><path d="M1.5,10 H14 L12,15.5 H1.5Z" fill="#d2e2f8" stroke="#3a60b0" stroke-width="0.9"/><path d="M12,2 V8 M12,2 L14,5 L16,2 V8" fill="none" stroke="#2a5aa8" stroke-width="1.1"/><rect x="10" y="11.5" width="4.5" height="5.5" rx="1" fill="#f4c840" stroke="#a07010" stroke-width="0.7"/></svg>
<div class="t" style="left:29px;top:427.9px;font-size:13.5px;line-height:16.2px;color:#a4854a;font-weight:normal;">&gt;</div>
<div class="t" style="left:39.5px;top:426.8px;font-size:15.3px;line-height:18.4px;color:#3c3c3c;font-weight:normal;">SmartPlannerBreadthFirstSearch</div>
<div class="t" style="left:269.83314062500006px;top:426.8px;font-size:15.3px;line-height:18.4px;color:#a4854a;font-weight:normal;">[Cor</div>
<svg class="a" style="left:2.5px;top:452px;" width="6" height="10" viewBox="0 0 6 10"><path d="M0.5,0.5 L5.5,5 L0.5,9.5Z" fill="#3a3a3a"/></svg>
<svg class="a" style="left:10px;top:448px;" width="18" height="18" viewBox="0 0 18 18"><path d="M1.5,5.5 H6 L7,4 H11 V15 H1.5Z" fill="#faf0c8" stroke="#9a8050" stroke-width="0.8"/><path d="M1.5,10 H14 L12,15.5 H1.5Z" fill="#d2e2f8" stroke="#3a60b0" stroke-width="0.9"/><path d="M12,2 V8 M12,2 L14,5 L16,2 V8" fill="none" stroke="#2a5aa8" stroke-width="1.1"/><rect x="10" y="11.5" width="4.5" height="5.5" rx="1" fill="#f4c840" stroke="#a07010" stroke-width="0.7"/></svg>
<div class="t" style="left:29px;top:448.9px;font-size:13.5px;line-height:16.2px;color:#a4854a;font-weight:normal;">&gt;</div>
<div class="t" style="left:39.5px;top:447.8px;font-size:15.3px;line-height:18.4px;color:#3c3c3c;font-weight:normal;">SmartRobotConsole</div>
<div class="t" style="left:182.259765625px;top:447.8px;font-size:15.3px;line-height:18.4px;color:#a4854a;font-weight:normal;">[ComponentRepo</div>
<svg class="a" style="left:0.5px;top:475px;" width="10" height="6" viewBox="0 0 10 6"><path d="M0.5,0.5 H9.5 L5,5.5Z" fill="#3a3a3a"/></svg>
<svg class="a" style="left:10px;top:469px;" width="18" height="18" viewBox="0 0 18 18"><path d="M1.5,5.5 H6 L7,4 H11 V15 H1.5Z" fill="#faf0c8" stroke="#9a8050" stroke-width="0.8"/><path d="M1.5,10 H14 L12,15.5 H1.5Z" fill="#d2e2f8" stroke="#3a60b0" stroke-width="0.9"/><path d="M12,2 V8 M12,2 L14,5 L16,2 V8" fill="none" stroke="#2a5aa8" stroke-width="1.1"/><rect x="10" y="11.5" width="4.5" height="5.5" rx="1" fill="#f4c840" stroke="#a07010" stroke-width="0.7"/><path d="M3.5,11 L6.5,17 H0.5Z" fill="#f8d020" stroke="#806000" stroke-width="0.6"/></svg>
<div class="t" style="left:29px;top:469.9px;font-size:13.5px;line-height:16.2px;color:#a4854a;font-weight:normal;">&gt;</div>
<div class="t" style="left:39.5px;top:468.8px;font-size:15.3px;line-height:18.4px;color:#3c3c3c;font-weight:normal;">SystemIntralogisticsPilot</div>
<div class="t" style="left:210.29940625px;top:468.8px;font-size:15.3px;line-height:18.4px;color:#a4854a;font-weight:normal;">[20181123-D</div>
<svg class="a" style="left:10.5px;top:494px;" width="6" height="10" viewBox="0 0 6 10"><path d="M0.5,0.5 L5.5,5 L0.5,9.5Z" fill="#3a3a3a"/></svg>
<svg class="a" style="left:19px;top:490px;" width="18" height="18" viewBox="0 0 18 18"><rect x="1" y="8" width="10" height="3" fill="#2a8a5a"/><rect x="1" y="11" width="10" height="3" fill="#c03030"/><rect x="1" y="5" width="10" height="3" fill="#3050a0"/><path d="M10,15 L13,3 L16,15Z" fill="#e0a020"/></svg>
<div class="t" style="left:37.5px;top:489.8px;font-size:15.3px;line-height:18.4px;color:#3c3c3c;font-weight:normal;">Project Dependencies</div>
<svg class="a" style="left:10.5px;top:515px;" width="6" height="10" viewBox="0 0 6 10"><path d="M0.5,0.5 L5.5,5 L0.5,9.5Z" fill="#3a3a3a"/></svg>
<svg class="a" style="left:19px;top:511px;" width="18" height="18" viewBox="0 0 18 18"><rect x="1" y="8" width="10" height="3" fill="#2a8a5a"/><rect x="1" y="11" width="10" height="3" fill="#c03030"/><rect x="1" y="5" width="10" height="3" fill="#3050a0"/><path d="M10,15 L13,3 L16,15Z" fill="#e0a020"/></svg>
<div class="t" style="left:37.5px;top:510.8px;font-size:15.3px;line-height:18.4px;color:#3c3c3c;font-weight:normal;">JRE System Library</div>
<div class="t" style="left:177.677890625px;top:510.8px;font-size:15.3px;line-height:18.4px;color:#a4854a;font-weight:normal;">[java-8-openjdk-am</div>
<svg class="a" style="left:10.5px;top:536px;" width="6" height="10" viewBox="0 0 6 10"><path d="M0.5,0.5 L5.5,5 L0.5,9.5Z" fill="#3a3a3a"/></svg>
<svg class="a" style="left:19px;top:532px;" width="18" height="18" viewBox="0 0 18 18"><path d="M1,6 H6 L7,4 H12 V15 H1Z" fill="#f3d98f" stroke="#8a6a20" stroke-width="0.8"/><rect x="7" y="2" width="8" height="8" fill="none" stroke="#6a3a10" stroke-width="1.3"/><path d="M11,2 V10 M7,6 H15" stroke="#6a3a10" stroke-width="1"/><rect x="9" y="11" width="4" height="5" fill="#e8b030"/></svg>
<div class="t" style="left:37.5px;top:531.8px;font-size:15.3px;line-height:18.4px;color:#3c3c3c;font-weight:normal;">model</div>
<svg class="a" style="left:10.5px;top:557px;" width="6" height="10" viewBox="0 0 6 10"><path d="M0.5,0.5 L5.5,5 L0.5,9.5Z" fill="#3a3a3a"/></svg>
<svg class="a" style="left:19px;top:553px;" width="18" height="18" viewBox="0 0 18 18"><rect x="1" y="8" width="10" height="3" fill="#2a8a5a"/><rect x="1" y="11" width="10" height="3" fill="#c03030"/><rect x="1" y="5" width="10" height="3" fill="#3050a0"/><path d="M10,15 L13,3 L16,15Z" fill="#e0a020"/></svg>
<div class="t" style="left:37.5px;top:552.8px;font-size:15.3px;line-height:18.4px;color:#3c3c3c;font-weight:normal;">Referenced Libraries</div>
<svg class="a" style="left:8.5px;top:580px;" width="10" height="6" viewBox="0 0 10 6"><path d="M0.5,0.5 H9.5 L5,5.5Z" fill="#3a3a3a"/></svg>
<svg class="a" style="left:19px;top:574px;" width="18" height="18" viewBox="0 0 18 18"><path d="M1,5 H6 L7,3 H12 V14 H1Z" fill="#f3d98f" stroke="#8a6a20" stroke-width="0.8"/><path d="M2,8 H15 L12,14 H1Z" fill="#f8e6a8" stroke="#8a6a20" stroke-width="0.8"/><text x="9" y="17" font-size="8" font-weight="bold" fill="#2030a0">?</text></svg>
<div class="t" style="left:37.5px;top:574.9px;font-size:13.5px;line-height:16.2px;color:#a4854a;font-weight:normal;">&gt;</div>
<div class="t" style="left:48.0px;top:573.8px;font-size:15.3px;line-height:18.4px;color:#3c3c3c;font-weight:normal;">datasheet-gen</div>
<div class="a" style="left:0px;top:593.5px;width:295px;height:21px;background:#f07746"></div>
<svg class="a" style="left:28px;top:595px;" width="18" height="18" viewBox="0 0 18 18"><path d="M2,1 H10 L13,4 V16 H2Z" fill="#fff" stroke="#555" stroke-width="0.9"/><path d="M4,5 H9 M4,8 H11 M4,11 H8" stroke="#555" stroke-width="0.9"/><path d="M10,10 L15,3" stroke="#333" stroke-width="1.5"/><text x="9" y="17" font-size="7" font-weight="bold" fill="#2030a0">?</text></svg>
<div class="t" style="left:46px;top:594.8px;font-size:15.3px;line-height:18.4px;color:#ffffff;font-weight:normal;">SystemIntralogisticsPilot.skills.json</div>
<svg class="a" style="left:10.5px;top:620px;" width="6" height="10" viewBox="0 0 6 10"><path d="M0.5,0.5 L5.5,5 L0.5,9.5Z" fill="#3a3a3a"/></svg>
<svg class="a" style="left:19px;top:616px;" width="18" height="18" viewBox="0 0 18 18"><path d="M1,5 H6 L7,3 H12 V14 H1Z" fill="#f3d98f" stroke="#8a6a20" stroke-width="0.8"/><path d="M2,8 H15 L12,14 H1Z" fill="#f8e6a8" stroke="#8a6a20" stroke-width="0.8"/><rect x="9" y="11" width="4" height="5" fill="#e8b030"/></svg>
<div class="t" style="left:37.5px;top:616.9px;font-size:13.5px;line-height:16.2px;color:#a4854a;font-weight:normal;">&gt;</div>
<div class="t" style="left:48.0px;top:615.8px;font-size:15.3px;line-height:18.4px;color:#3c3c3c;font-weight:normal;">smartsoft</div>
<svg class="a" style="left:10.5px;top:641px;" width="6" height="10" viewBox="0 0 6 10"><path d="M0.5,0.5 L5.5,5 L0.5,9.5Z" fill="#3a3a3a"/></svg>
<svg class="a" style="left:19px;top:637px;" width="18" height="18" viewBox="0 0 18 18"><path d="M2,1 H10 L13,4 V16 H2Z" fill="#fff" stroke="#777" stroke-width="0.9"/><rect x="4" y="5" width="4" height="3" fill="none" stroke="#4a80c0" stroke-width="0.9"/><rect x="7" y="10" width="4" height="3" fill="none" stroke="#4a80c0" stroke-width="0.9"/><rect x="9" y="11" width="4" height="5" fill="#e8b030"/></svg>
<div class="t" style="left:37.5px;top:637.2px;font-size:14.6px;line-height:17.5px;color:#3c3c3c;font-weight:bold;">representations.aird</div>
<svg class="a" style="left:19px;top:658px;" width="18" height="18" viewBox="0 0 18 18"><circle cx="8" cy="8" r="6.5" fill="#5a9ad8"/><path d="M3,6 Q6,3 8,6 T13,8 L12,12 Q8,10 5,13Z" fill="#6ab04a"/><rect x="9" y="11" width="4" height="5" fill="#e8b030"/></svg>
<div class="t" style="left:37.5px;top:657.8px;font-size:15.3px;line-height:18.4px;color:#3c3c3c;font-weight:normal;">SystemIntralogisticsPilotComponentArchitecture</div>
<svg class="a" style="left:2.5px;top:683px;" width="6" height="10" viewBox="0 0 6 10"><path d="M0.5,0.5 L5.5,5 L0.5,9.5Z" fill="#3a3a3a"/></svg>
<svg class="a" style="left:10px;top:679px;" width="18" height="18" viewBox="0 0 18 18"><path d="M1.5,5.5 H6 L7,4 H11 V15 H1.5Z" fill="#faf0c8" stroke="#9a8050" stroke-width="0.8"/><path d="M1.5,10 H14 L12,15.5 H1.5Z" fill="#d2e2f8" stroke="#3a60b0" stroke-width="0.9"/><path d="M12,2 V8 M12,2 L14,5 L16,2 V8" fill="none" stroke="#2a5aa8" stroke-width="1.1"/><rect x="10" y="11.5" width="4.5" height="5.5" rx="1" fill="#f4c840" stroke="#a07010" stroke-width="0.7"/><path d="M3.5,11 L6.5,17 H0.5Z" fill="#f8d020" stroke="#806000" stroke-width="0.6"/></svg>
<div class="t" style="left:29px;top:679.9px;font-size:13.5px;line-height:16.2px;color:#a4854a;font-weight:normal;">&gt;</div>
<div class="t" style="left:39.5px;top:678.8px;font-size:15.3px;line-height:18.4px;color:#3c3c3c;font-weight:normal;">SystemLaserObstacleAvoidP3dxPlayerStage</div>
<svg class="a" style="left:2.5px;top:704px;" width="6" height="10" viewBox="0 0 6 10"><path d="M0.5,0.5 L5.5,5 L0.5,9.5Z" fill="#3a3a3a"/></svg>
<svg class="a" style="left:10px;top:700px;" width="18" height="18" viewBox="0 0 18 18"><path d="M1.5,5.5 H6 L7,4 H11 V15 H1.5Z" fill="#faf0c8" stroke="#9a8050" stroke-width="0.8"/><path d="M1.5,10 H14 L12,15.5 H1.5Z" fill="#d2e2f8" stroke="#3a60b0" stroke-width="0.9"/><path d="M12,2 V8 M12,2 L14,5 L16,2 V8" fill="none" stroke="#2a5aa8" stroke-width="1.1"/><rect x="10" y="11.5" width="4.5" height="5.5" rx="1" fill="#f4c840" stroke="#a07010" stroke-width="0.7"/><path d="M3.5,11 L6.5,17 H0.5Z" fill="#f8d020" stroke="#806000" stroke-width="0.6"/></svg>
<div class="t" style="left:29px;top:700.9px;font-size:13.5px;line-height:16.2px;color:#a4854a;font-weight:normal;">&gt;</div>
<div class="t" style="left:39.5px;top:699.8px;font-size:15.3px;line-height:18.4px;color:#3c3c3c;font-weight:normal;">SystemLaserObstacleAvoidTiagoGazebo</div>
<svg class="a" style="left:2.5px;top:725px;" width="6" height="10" viewBox="0 0 6 10"><path d="M0.5,0.5 L5.5,5 L0.5,9.5Z" fill="#3a3a3a"/></svg>
<svg class="a" style="left:10px;top:721px;" width="18" height="18" viewBox="0 0 18 18"><path d="M1.5,5.5 H6 L7,4 H11 V15 H1.5Z" fill="#faf0c8" stroke="#9a8050" stroke-width="0.8"/><path d="M1.5,10 H14 L12,15.5 H1.5Z" fill="#d2e2f8" stroke="#3a60b0" stroke-width="0.9"/><path d="M12,2 V8 M12,2 L14,5 L16,2 V8" fill="none" stroke="#2a5aa8" stroke-width="1.1"/><rect x="10" y="11.5" width="4.5" height="5.5" rx="1" fill="#f4c840" stroke="#a07010" stroke-width="0.7"/><path d="M3.5,11 L6.5,17 H0.5Z" fill="#f8d020" stroke="#806000" stroke-width="0.6"/></svg>
<div class="t" style="left:29px;top:721.9px;font-size:13.5px;line-height:16.2px;color:#a4854a;font-weight:normal;">&gt;</div>
<div class="t" style="left:39.5px;top:720.8px;font-size:15.3px;line-height:18.4px;color:#3c3c3c;font-weight:normal;">SystemP3dxNavigationPlayerStageSimulator</div></div>
<div class="a" style="left:2px;top:927px;width:300px;height:199px;background:#e3e3e3;border:1px solid #a8a8a8;border-radius:7px"></div>
<div class="a" style="left:96px;top:929px;width:205px;height:27px;background:#dcdcdc;border-bottom:1px solid #b4b4b4;border-top-right-radius:6px"></div>
<div class="a" style="left:2px;top:927px;width:101px;height:29px;background:#e3e3e3;border:1px solid #b4b4b4;border-bottom:none;border-radius:7px 6px 0 0"></div>
<svg class="a" style="left:7px;top:935px;" width="14" height="15" viewBox="0 0 14 15"><rect x="1" y="1" width="4" height="4" fill="#cfe0f5" stroke="#4a80c0"/><rect x="1" y="10" width="4" height="4" fill="#cfe0f5" stroke="#4a80c0"/><rect x="5" y="6" width="3" height="3" fill="#cfe0f5" stroke="#4a80c0"/><path d="M8,3 H13 M10,7.5 H13 M8,12 H13" stroke="#4a80c0"/></svg>
<div class="t" style="left:26px;top:932.8px;font-size:15.4px;line-height:18.5px;color:#101010;font-weight:normal;">Outline</div>
<svg class="a" style="left:84px;top:936px;" width="12" height="12" viewBox="0 0 12 12"><path d="M0.8,3.2 L3.2,0.8 L6,3.6 L8.8,0.8 L11.2,3.2 L8.4,6 L11.2,8.8 L8.8,11.2 L6,8.4 L3.2,11.2 L0.8,8.8 L3.6,6Z" fill="#fff" stroke="#000" stroke-width="1.1"/></svg>
<svg class="a" style="left:135px;top:935px;" width="15" height="14" viewBox="0 0 15 14"><circle cx="5" cy="5" r="3.5" fill="#d8d8e0"/><circle cx="10" cy="5" r="3.5" fill="#d0d0d8"/><circle cx="7.5" cy="9.5" r="3.5" fill="#b8b8d0"/></svg>
<svg class="a" style="left:163px;top:935px;" width="13" height="14" viewBox="0 0 13 14"><rect x="1" y="1" width="3" height="3" fill="none" stroke="#2a4ab0"/><rect x="8" y="5" width="3" height="3" fill="none" stroke="#2a4ab0"/><rect x="8" y="10" width="3" height="3" fill="none" stroke="#2a4ab0"/><path d="M2.5,4 V11.5 H8 M2.5,6.5 H8" stroke="#2a4ab0"/></svg>
<div class="a" style="left:184px;top:932px;width:22px;height:19px;background:#c8c8c8;border:1px solid #a8a8a8;border-radius:4px"></div>
<svg class="a" style="left:186px;top:933px;" width="18" height="17" viewBox="0 0 18 17"><path d="M2,4 L14,1 V13 L2,16Z" fill="#e8e4b0" stroke="#999"/><path d="M3,8 H10 M3,11 H10" stroke="#999"/><rect x="11" y="1" width="5" height="5" fill="#f0e040" stroke="#777"/></svg>
<svg class="a" style="left:222px;top:937px;" width="11" height="8" viewBox="0 0 11 8"><path d="M0.8,0.8 H10.2 L5.5,6.5Z" fill="#fff" stroke="#000" stroke-width="1.3"/></svg>
<svg class="a" style="left:248px;top:937px;" width="40" height="12" viewBox="0 0 40 12"><rect x="1" y="1.5" width="9" height="3" fill="#fff" stroke="#000" stroke-width="1.2"/><rect x="27" y="0.6" width="10" height="10" fill="#fff" stroke="#000" stroke-width="1.2"/><path d="M27,2.2 H37" stroke="#000" stroke-width="2"/></svg>
<div class="a" style="left:4px;top:956px;width:162px;height:166px;background:#ffffff"></div>
<div class="a" style="left:166px;top:956px;width:133px;height:166px;background:#f7f7f7"></div>
<div class="a" style="left:17px;top:958px;width:148px;height:99px;background:#fde3d8;border:1px solid #f07746"></div>
<svg class="a" style="left:17px;top:958px;" width="148" height="99" viewBox="0 0 148 99"><rect x="7.9" y="0.7" width="23.6" height="30.2" fill="none" stroke="#d8b4a4" stroke-width="0.6"/><rect x="50.9" y="0.7" width="22.0" height="15.6" fill="none" stroke="#d8b4a4" stroke-width="0.6"/><rect x="91.2" y="0.7" width="21.1" height="13.7" fill="none" stroke="#d8b4a4" stroke-width="0.6"/><rect x="125.1" y="0.7" width="21.1" height="13.7" fill="none" stroke="#d8b4a4" stroke-width="0.6"/><rect x="91.2" y="17.2" width="19.3" height="10.1" fill="none" stroke="#d8b4a4" stroke-width="0.6"/><rect x="50.9" y="21.5" width="22.0" height="18.3" fill="none" stroke="#d8b4a4" stroke-width="0.6"/><rect x="4.2" y="35.5" width="27.3" height="6.9" fill="none" stroke="#d8b4a4" stroke-width="0.6"/><rect x="4.2" y="44.6" width="27.3" height="14.0" fill="none" stroke="#d8b4a4" stroke-width="0.6"/><rect x="4.2" y="61.1" width="27.3" height="11.9" fill="none" stroke="#d8b4a4" stroke-width="0.6"/><rect x="4.2" y="75.8" width="27.3" height="17.4" fill="none" stroke="#d8b4a4" stroke-width="0.6"/><rect x="45.4" y="70.3" width="11.9" height="12.8" fill="none" stroke="#d8b4a4" stroke-width="0.6"/><rect x="72.0" y="70.3" width="15.5" height="11.0" fill="none" stroke="#d8b4a4" stroke-width="0.6"/><rect x="72.0" y="84.1" width="15.5" height="8.9" fill="none" stroke="#d8b4a4" stroke-width="0.6"/><rect x="101.3" y="52.9" width="16.5" height="5.2" fill="none" stroke="#d8b4a4" stroke-width="0.6"/><rect x="101.3" y="60.0" width="16.5" height="6.4" fill="none" stroke="#d8b4a4" stroke-width="0.6"/><rect x="101.3" y="67.8" width="16.5" height="11.0" fill="none" stroke="#d8b4a4" stroke-width="0.6"/><polyline points="33.2,8.3 49.2,8.3" fill="none" stroke="#e0c0b0" stroke-width="0.5"/><polyline points="33.2,20.8 74.0,20.8 74.0,29.5 74.5,29.5" fill="none" stroke="#e0c0b0" stroke-width="0.5"/><polyline points="33.2,26.4 44.6,26.4 44.6,37.0 49.2,37.0" fill="none" stroke="#e0c0b0" stroke-width="0.5"/><polyline points="6.1,26.4 3.3,26.4 3.3,94.1 65.6,94.1 65.6,90.1 70.3,90.1" fill="none" stroke="#e0c0b0" stroke-width="0.5"/><polyline points="74.5,5.6 89.5,5.6" fill="none" stroke="#e0c0b0" stroke-width="0.5"/><polyline points="74.5,10.0 79.4,10.0 79.4,22.0 89.5,21.9" fill="none" stroke="#e0c0b0" stroke-width="0.5"/><polyline points="74.5,13.6 76.6,13.6 76.6,29.4 74.5,29.4" fill="none" stroke="#e0c0b0" stroke-width="0.5"/><polyline points="89.5,8.2 86.7,8.2 86.7,21.2 89.5,21.2" fill="none" stroke="#e0c0b0" stroke-width="0.5"/><polyline points="113.9,8.1 123.4,8.1" fill="none" stroke="#e0c0b0" stroke-width="0.5"/><polyline points="113.9,11.8 115.1,11.8 115.1,30.0 74.5,30.0" fill="none" stroke="#e0c0b0" stroke-width="0.5"/><polyline points="124.0,12.5 123.4,12.5 123.4,94.1 68.2,94.1 68.2,90.4 70.3,90.4" fill="none" stroke="#e0c0b0" stroke-width="0.5"/><polyline points="89.5,24.8 83.1,24.8 83.1,29.7 74.5,29.7" fill="none" stroke="#e0c0b0" stroke-width="0.5"/><polyline points="74.5,30.5 95.9,30.5 95.9,88.6 89.2,88.6" fill="none" stroke="#e0c0b0" stroke-width="0.5"/><polyline points="74.5,30.7 84.9,30.7 84.9,68.4 44.6,68.4 44.6,86.3 33.2,86.3" fill="none" stroke="#e0c0b0" stroke-width="0.5"/><polyline points="74.5,31.0 84.0,31.0 84.0,67.6 43.6,67.6 43.6,70.5 33.2,70.5" fill="none" stroke="#e0c0b0" stroke-width="0.5"/><polyline points="74.5,31.2 82.2,31.2 82.2,52.6 33.2,52.6" fill="none" stroke="#e0c0b0" stroke-width="0.5"/><polyline points="49.2,29.2 34.5,29.2 34.5,40.8 33.2,40.8" fill="none" stroke="#e0c0b0" stroke-width="0.5"/><polyline points="49.2,37.5 40.9,37.5 40.9,49.2 33.2,49.2" fill="none" stroke="#e0c0b0" stroke-width="0.5"/><polyline points="49.2,37.8 41.8,37.8 41.8,82.7 33.2,82.7" fill="none" stroke="#e0c0b0" stroke-width="0.5"/><polyline points="33.2,56.5 34.5,56.5 34.5,66.0 33.2,66.0" fill="none" stroke="#e0c0b0" stroke-width="0.5"/><polyline points="33.2,66.3 34.5,66.3 34.5,79.6 33.2,79.6" fill="none" stroke="#e0c0b0" stroke-width="0.5"/><polyline points="33.2,89.5 70.3,89.5" fill="none" stroke="#e0c0b0" stroke-width="0.5"/><polyline points="62.0,41.6 62.0,74.1 59.0,74.1" fill="none" stroke="#e0c0b0" stroke-width="0.5"/><polyline points="68.4,41.6 68.4,77.6 59.0,77.6" fill="none" stroke="#e0c0b0" stroke-width="0.5"/><polyline points="69.3,41.6 69.3,74.4 70.3,74.4" fill="none" stroke="#e0c0b0" stroke-width="0.5"/><polyline points="59.0,81.2 64.7,81.2 64.7,89.0 70.3,89.0" fill="none" stroke="#e0c0b0" stroke-width="0.5"/><polyline points="70.3,78.9 68.4,78.9 68.4,88.6 70.3,88.6" fill="none" stroke="#e0c0b0" stroke-width="0.5"/><rect x="31.1" y="7.2" width="2" height="2" fill="#504040"/><rect x="31.1" y="20.0" width="2" height="2" fill="#504040"/><rect x="31.1" y="25.5" width="2" height="2" fill="#504040"/><rect x="6.3" y="25.5" width="2" height="2" fill="#504040"/><rect x="72.4" y="4.5" width="2" height="2" fill="#504040"/><rect x="49.3" y="7.2" width="2" height="2" fill="#504040"/><rect x="72.4" y="9.0" width="2" height="2" fill="#504040"/><rect x="72.4" y="12.6" width="2" height="2" fill="#504040"/><rect x="89.6" y="4.8" width="2" height="2" fill="#504040"/><rect x="89.6" y="7.2" width="2" height="2" fill="#504040"/><rect x="111.8" y="7.2" width="2" height="2" fill="#504040"/><rect x="111.8" y="10.9" width="2" height="2" fill="#504040"/><rect x="123.5" y="7.2" width="2" height="2" fill="#504040"/><rect x="123.5" y="10.9" width="2" height="2" fill="#504040"/><rect x="89.6" y="20.9" width="2" height="2" fill="#504040"/><rect x="89.6" y="23.7" width="2" height="2" fill="#504040"/><rect x="49.3" y="28.3" width="2" height="2" fill="#504040"/><rect x="49.3" y="36.5" width="2" height="2" fill="#504040"/><rect x="72.4" y="29.0" width="2" height="2" fill="#504040"/><rect x="61.1" y="39.5" width="2" height="2" fill="#504040"/><rect x="67.5" y="39.5" width="2" height="2" fill="#504040"/><rect x="31.1" y="39.7" width="2" height="2" fill="#504040"/><rect x="31.1" y="48.4" width="2" height="2" fill="#504040"/><rect x="31.1" y="52.1" width="2" height="2" fill="#504040"/><rect x="31.1" y="55.7" width="2" height="2" fill="#504040"/><rect x="31.1" y="64.9" width="2" height="2" fill="#504040"/><rect x="31.1" y="69.5" width="2" height="2" fill="#504040"/><rect x="31.1" y="78.6" width="2" height="2" fill="#504040"/><rect x="31.1" y="81.9" width="2" height="2" fill="#504040"/><rect x="31.1" y="85.5" width="2" height="2" fill="#504040"/><rect x="31.1" y="89.2" width="2" height="2" fill="#504040"/><rect x="56.8" y="73.1" width="2" height="2" fill="#504040"/><rect x="56.8" y="76.6" width="2" height="2" fill="#504040"/><rect x="56.8" y="80.0" width="2" height="2" fill="#504040"/><rect x="70.4" y="73.4" width="2" height="2" fill="#504040"/><rect x="70.4" y="77.1" width="2" height="2" fill="#504040"/><rect x="70.4" y="88.7" width="2" height="2" fill="#504040"/><rect x="87.1" y="87.8" width="2" height="2" fill="#504040"/><rect x="99.8" y="62.9" width="2" height="2" fill="#504040"/><rect x="99.8" y="70.3" width="2" height="2" fill="#504040"/><rect x="99.8" y="72.7" width="2" height="2" fill="#504040"/><rect x="99.8" y="75.4" width="2" height="2" fill="#504040"/></svg>
<div class="a" style="left:306px;top:92px;width:1575px;height:1034px;background:#ececec;border:1px solid #a8a8a8;border-radius:7px"></div>
<div class="a" style="left:306px;top:92px;width:388px;height:30px;background:#ffffff;border:1px solid #b4b4b4;border-bottom:none;border-radius:7px 6px 0 0"></div>
<div class="a" style="left:693px;top:120px;width:1187px;height:1px;background:#b4b4b4"></div>
<svg class="a" style="left:314px;top:100px;" width="14" height="14" viewBox="0 0 14 14"><rect x="5" y="1" width="4" height="3" fill="none" stroke="#2a5ab0"/><rect x="1" y="9" width="4" height="4" fill="none" stroke="#2a5ab0"/><rect x="9" y="9" width="4" height="4" fill="#7ac040" stroke="#3a7a20"/><path d="M7,4 V6.5 H3 V9 M7,6.5 H11 V9" stroke="#2a5ab0"/></svg>
<div class="t" style="left:331px;top:98.0px;font-size:15.8px;line-height:19.0px;color:#101010;font-weight:normal;">SystemIntralogisticsPilotComponentArchitecture</div>
<svg class="a" style="left:675px;top:101px;" width="12" height="12" viewBox="0 0 12 12"><path d="M0.8,3.2 L3.2,0.8 L6,3.6 L8.8,0.8 L11.2,3.2 L8.4,6 L11.2,8.8 L8.8,11.2 L6,8.4 L3.2,11.2 L0.8,8.8 L3.6,6Z" fill="#fff" stroke="#000" stroke-width="1.1"/></svg>
<svg class="a" style="left:1827px;top:102px;" width="40" height="12" viewBox="0 0 40 12"><rect x="1" y="1.5" width="9" height="3" fill="#fff" stroke="#000" stroke-width="1.2"/><rect x="27" y="0.6" width="10" height="10" fill="#fff" stroke="#000" stroke-width="1.2"/><path d="M27,2.2 H37" stroke="#000" stroke-width="2"/></svg>
<div class="a" style="left:307px;top:121px;width:1573px;height:28px;background:#f9f9f9"></div>
<div class="a" style="left:307px;top:149px;width:1437px;height:1px;background:#dcdcdc"></div>
<svg class="a" style="left:315px;top:128px;" width="16" height="16" viewBox="0 0 16 16"><rect x="1" y="3" width="5" height="5" fill="#e0ecf8" stroke="#4a80c8"/><rect x="9" y="1" width="5" height="5" fill="#e0ecf8" stroke="#4a80c8"/><rect x="9" y="9" width="5" height="5" fill="#e0ecf8" stroke="#4a80c8"/></svg>
<svg class="a" style="left:339.5px;top:133px;" width="10" height="6" viewBox="0 0 10 6"><path d="M0,0 H10 L5,5.5Z" fill="#333"/></svg>
<svg class="a" style="left:359px;top:128px;" width="16" height="16" viewBox="0 0 16 16"><rect x="1.5" y="1.5" width="13" height="13" fill="none" stroke="#2a4ab0" stroke-dasharray="2 2"/><rect x="3" y="3" width="4" height="4" fill="#c8daf0" stroke="#4a80c8"/><rect x="9" y="9" width="4" height="4" fill="#c8daf0" stroke="#4a80c8"/><path d="M6,6 L10,10" stroke="#4a80c8"/></svg>
<svg class="a" style="left:384px;top:133px;" width="10" height="6" viewBox="0 0 10 6"><path d="M0,0 H10 L5,5.5Z" fill="#333"/></svg>
<div class="a" style="left:404px;top:127px;width:1px;height:20px;background:#dedede"></div>
<svg class="a" style="left:415px;top:127px;" width="16" height="17" viewBox="0 0 16 17"><path d="M3,12 Q1,6 6,5 L6,2 L11,7 L6,11 V8 Q3,8 3,12Z" fill="#f0c040" stroke="#b08020" stroke-width="0.7"/><path d="M13,5 Q15,11 10,12 V15 L5,10 L10,6 V9 Q13,9 13,5Z" fill="#f0c040" stroke="#b08020" stroke-width="0.7"/></svg>
<div class="a" style="left:442px;top:127px;width:1px;height:20px;background:#dedede"></div>
<svg class="a" style="left:454px;top:128px;" width="16" height="16" viewBox="0 0 16 16"><rect x="1" y="1" width="10" height="10" fill="#fff" stroke="#7a9ac8"/><rect x="4" y="4" width="11" height="11" fill="#fff" stroke="#7a9ac8"/></svg>
<svg class="a" style="left:478px;top:133px;" width="10" height="6" viewBox="0 0 10 6"><path d="M0,0 H10 L5,5.5Z" fill="#333"/></svg>
<svg class="a" style="left:497px;top:128px;" width="16" height="16" viewBox="0 0 16 16"><path d="M1,2 H10 L7,7 V13 L5,14 V7Z" fill="#e8f4fc" stroke="#7ab0d8"/><path d="M6,4 H15 L12,9 V15 L10,16 V9Z" fill="#e8f4fc" stroke="#7ab0d8"/></svg>
<svg class="a" style="left:522px;top:133px;" width="10" height="6" viewBox="0 0 10 6"><path d="M0,0 H10 L5,5.5Z" fill="#333"/></svg>
<div class="a" style="left:541px;top:127px;width:1px;height:20px;background:#dedede"></div>
<svg class="a" style="left:553px;top:129px;" width="15" height="14" viewBox="0 0 15 14"><rect x="1" y="2" width="13" height="11" fill="#fff" stroke="#2a5aa0"/><rect x="1" y="2" width="13" height="3" fill="#7aa0d0"/><path d="M4,7 L8,11 M4,11 L8,7" stroke="#2a3a80" stroke-width="1.2"/><circle cx="11" cy="8" r="2" fill="#7ac040"/></svg>
<svg class="a" style="left:580px;top:127px;" width="17" height="17" viewBox="0 0 17 17"><rect x="1" y="4" width="11" height="11" fill="#fff" stroke="#2a5aa0"/><rect x="1" y="4" width="11" height="3" fill="#7aa0d0"/><path d="M4,10 L6,12 L10,8" stroke="#333" fill="none" stroke-width="1.2"/><path d="M10,6 L15,1" stroke="#3a9a3a" stroke-width="2.5"/></svg>
<div class="a" style="left:605px;top:127px;width:1px;height:20px;background:#dedede"></div>
<svg class="a" style="left:618px;top:127px;" width="15" height="17" viewBox="0 0 15 17"><rect x="1" y="3" width="12" height="13" fill="#f0e8d8" stroke="#c8b898"/><rect x="4" y="1" width="6" height="3" fill="#ddd" stroke="#aaa"/><rect x="4" y="8" width="4" height="3" fill="#f0a0a0"/><rect x="8" y="11" width="4" height="3" fill="#a0d0a0"/></svg>
<svg class="a" style="left:641px;top:133px;" width="10" height="6" viewBox="0 0 10 6"><path d="M0,0 H10 L5,5.5Z" fill="#999"/></svg>
<div class="a" style="left:661px;top:127px;width:1px;height:20px;background:#dedede"></div>
<svg class="a" style="left:673px;top:128px;" width="16" height="16" viewBox="0 0 16 16"><circle cx="6.5" cy="6.5" r="5" fill="#fff" stroke="#555" stroke-width="1.2"/><path d="M10,10 L15,15" stroke="#705030" stroke-width="2"/><path d="M4,6.5 H9 M6.5,4 V9" stroke="#2a50c0" stroke-width="1.5"/></svg>
<svg class="a" style="left:699px;top:128px;" width="16" height="16" viewBox="0 0 16 16"><circle cx="6.5" cy="6.5" r="5" fill="#fff" stroke="#555" stroke-width="1.2"/><path d="M10,10 L15,15" stroke="#705030" stroke-width="2"/><path d="M4,6.5 H9" stroke="#2a50c0" stroke-width="1.5"/></svg>
<div class="a" style="left:722px;top:123px;width:191px;height:26px;background:linear-gradient(#fdfdfd,#f0f0f0);border:1px solid #b8b8b8;border-radius:4px"></div>
<div class="a" style="left:885px;top:124px;width:1px;height:24px;background:#d0d0d0"></div>
<div class="t" style="left:728px;top:127.5px;font-size:15px;line-height:18.0px;color:#3a3a3a;font-weight:normal;">75%</div>
<svg class="a" style="left:893.5px;top:133px;" width="10" height="6" viewBox="0 0 10 6"><path d="M0,0 H10 L5,5.5Z" fill="#333"/></svg>
<div class="a" style="left:920px;top:127px;width:1px;height:20px;background:#dedede"></div>
<svg class="a" style="left:931px;top:129px;" width="17" height="13" viewBox="0 0 17 13"><rect x="1" y="3" width="15" height="9" fill="#555" stroke="#222"/><rect x="4" y="1" width="5" height="3" fill="#444"/><circle cx="9" cy="7.5" r="3" fill="#ccc" stroke="#222"/></svg>
<svg class="a" style="left:958px;top:128px;" width="15" height="15" viewBox="0 0 15 15"><rect x="1" y="1" width="13" height="13" fill="#fff" stroke="#3a80c0" stroke-width="1.2"/><rect x="7" y="3" width="5" height="3" fill="none" stroke="#3a80c0"/><rect x="3" y="9" width="5" height="3" fill="none" stroke="#3a80c0"/></svg><svg width="1437" height="975" viewBox="307 150 1437 975" style="position:absolute;left:307px;top:150px">
<defs><linearGradient id="yg" x1="0" y1="0" x2="1" y2="0"><stop offset="0" stop-color="#ffffff"/><stop offset="0.45" stop-color="#fffae0"/><stop offset="1" stop-color="#fff2b0"/></linearGradient></defs>
<style>.bt{font:bold 8.85px "Liberation Sans",sans-serif;fill:#000}.pl{font:8.1px "Liberation Sans",sans-serif;fill:#000;stroke:#000;stroke-width:0.18px}</style>
<rect x="307" y="150" width="1437" height="975" fill="#fff"/>
<rect x="382" y="152" width="232" height="297" fill="#d8d6de"/>
<rect x="380.5" y="150.5" width="232" height="297" fill="url(#yg)" stroke="#666" stroke-width="1"/>
<path d="M612,151 V447 H381" fill="none" stroke="#747050" stroke-width="2"/>
<g transform="translate(414,154)"><path d="M8,2 V0.5 H0.5 V8.5 H8 V7" fill="none" stroke="#222" stroke-width="1"/><rect x="6.5" y="2.2" width="3.2" height="1.8" fill="#fff" stroke="#222" stroke-width="0.9"/><rect x="6.5" y="5.2" width="3.2" height="1.8" fill="#fff" stroke="#222" stroke-width="0.9"/></g>
<text x="428" y="161.2" class="bt">SmartCdlServer: SmartCdlServer</text>
<rect x="805" y="152" width="216" height="153" fill="#d8d6de"/>
<rect x="803.5" y="150.5" width="216" height="153" fill="url(#yg)" stroke="#666" stroke-width="1"/>
<path d="M1019,151 V303 H804" fill="none" stroke="#747050" stroke-width="2"/>
<g transform="translate(823,159)"><path d="M8,2 V0.5 H0.5 V8.5 H8 V7" fill="none" stroke="#222" stroke-width="1"/><rect x="6.5" y="2.2" width="3.2" height="1.8" fill="#fff" stroke="#222" stroke-width="0.9"/><rect x="6.5" y="5.2" width="3.2" height="1.8" fill="#fff" stroke="#222" stroke-width="0.9"/></g>
<text x="835.5" y="161.2" class="bt">ComponentPurePursuitNavigation:</text>
<text x="835.5" y="172.2" class="bt">ComponentPurePursuitNavigation</text>
<rect x="1201" y="152" width="207" height="135" fill="#d8d6de"/>
<rect x="1199.5" y="150.5" width="207" height="135" fill="url(#yg)" stroke="#666" stroke-width="1"/>
<path d="M1406,151 V285 H1200" fill="none" stroke="#747050" stroke-width="2"/>
<g transform="translate(1223,159)"><path d="M8,2 V0.5 H0.5 V8.5 H8 V7" fill="none" stroke="#222" stroke-width="1"/><rect x="6.5" y="2.2" width="3.2" height="1.8" fill="#fff" stroke="#222" stroke-width="0.9"/><rect x="6.5" y="5.2" width="3.2" height="1.8" fill="#fff" stroke="#222" stroke-width="0.9"/></g>
<text x="1236.5" y="161.2" class="bt">ComponentNavigationPlanner:</text>
<text x="1236.5" y="172.2" class="bt">ComponentNavigationPlanner</text>
<rect x="1534" y="152" width="207" height="135" fill="#d8d6de"/>
<rect x="1532.5" y="150.5" width="207" height="135" fill="url(#yg)" stroke="#666" stroke-width="1"/>
<path d="M1739,151 V285 H1533" fill="none" stroke="#747050" stroke-width="2"/>
<g transform="translate(1576,159)"><path d="M8,2 V0.5 H0.5 V8.5 H8 V7" fill="none" stroke="#222" stroke-width="1"/><rect x="6.5" y="2.2" width="3.2" height="1.8" fill="#fff" stroke="#222" stroke-width="0.9"/><rect x="6.5" y="5.2" width="3.2" height="1.8" fill="#fff" stroke="#222" stroke-width="0.9"/></g>
<text x="1589" y="161.2" class="bt">SmartMapperGridMap:</text>
<text x="1589" y="172.2" class="bt">SmartMapperGridMap</text>
<rect x="1201" y="314" width="190" height="99" fill="#d8d6de"/>
<rect x="1199.5" y="312.5" width="190" height="99" fill="url(#yg)" stroke="#666" stroke-width="1"/>
<path d="M1389,313 V411 H1200" fill="none" stroke="#747050" stroke-width="2"/>
<g transform="translate(1206,321)"><path d="M8,2 V0.5 H0.5 V8.5 H8 V7" fill="none" stroke="#222" stroke-width="1"/><rect x="6.5" y="2.2" width="3.2" height="1.8" fill="#fff" stroke="#222" stroke-width="0.9"/><rect x="6.5" y="5.2" width="3.2" height="1.8" fill="#fff" stroke="#222" stroke-width="0.9"/></g>
<text x="1220" y="323.2" class="bt">ComponentPathNavigationClient:</text>
<text x="1220" y="334.2" class="bt">ComponentPathNavigationClient</text>
<rect x="805" y="357" width="216" height="180" fill="#d8d6de"/>
<rect x="803.5" y="355.5" width="216" height="180" fill="url(#yg)" stroke="#666" stroke-width="1"/>
<path d="M1019,356 V535 H804" fill="none" stroke="#747050" stroke-width="2"/>
<g transform="translate(826,365)"><path d="M8,2 V0.5 H0.5 V8.5 H8 V7" fill="none" stroke="#222" stroke-width="1"/><rect x="6.5" y="2.2" width="3.2" height="1.8" fill="#fff" stroke="#222" stroke-width="0.9"/><rect x="6.5" y="5.2" width="3.2" height="1.8" fill="#fff" stroke="#222" stroke-width="0.9"/></g>
<text x="839" y="367.2" class="bt">ComponentRobotinoBaseServer:</text>
<text x="839" y="378.2" class="bt">ComponentRobotinoBaseServer</text>
<rect x="346" y="494" width="268" height="68" fill="#d8d6de"/>
<rect x="344.5" y="492.5" width="268" height="68" fill="url(#yg)" stroke="#666" stroke-width="1"/>
<path d="M612,493 V560 H345" fill="none" stroke="#747050" stroke-width="2"/>
<g transform="translate(354,501)"><path d="M8,2 V0.5 H0.5 V8.5 H8 V7" fill="none" stroke="#222" stroke-width="1"/><rect x="6.5" y="2.2" width="3.2" height="1.8" fill="#fff" stroke="#222" stroke-width="0.9"/><rect x="6.5" y="5.2" width="3.2" height="1.8" fill="#fff" stroke="#222" stroke-width="0.9"/></g>
<text x="367" y="503.2" class="bt">ComponentRobotinoConveyerBeltServer_OPCUA:</text>
<text x="367" y="514.2" class="bt">ComponentRobotinoConveyerBeltServer_OPCUA</text>
<rect x="346" y="584" width="268" height="138" fill="#d8d6de"/>
<rect x="344.5" y="582.5" width="268" height="138" fill="url(#yg)" stroke="#666" stroke-width="1"/>
<path d="M612,583 V720 H345" fill="none" stroke="#747050" stroke-width="2"/>
<g transform="translate(364,591)"><path d="M8,2 V0.5 H0.5 V8.5 H8 V7" fill="none" stroke="#222" stroke-width="1"/><rect x="6.5" y="2.2" width="3.2" height="1.8" fill="#fff" stroke="#222" stroke-width="0.9"/><rect x="6.5" y="5.2" width="3.2" height="1.8" fill="#fff" stroke="#222" stroke-width="0.9"/></g>
<text x="377" y="593.2" class="bt">ComponentRobotinoBatteryChargerDocking:</text>
<text x="377" y="604.2" class="bt">ComponentRobotinoBatteryChargerDocking</text>
<rect x="346" y="746" width="268" height="117" fill="#d8d6de"/>
<rect x="344.5" y="744.5" width="268" height="117" fill="url(#yg)" stroke="#666" stroke-width="1"/>
<path d="M612,745 V861 H345" fill="none" stroke="#747050" stroke-width="2"/>
<g transform="translate(400,753)"><path d="M8,2 V0.5 H0.5 V8.5 H8 V7" fill="none" stroke="#222" stroke-width="1"/><rect x="6.5" y="2.2" width="3.2" height="1.8" fill="#fff" stroke="#222" stroke-width="0.9"/><rect x="6.5" y="5.2" width="3.2" height="1.8" fill="#fff" stroke="#222" stroke-width="0.9"/></g>
<text x="413" y="755.2" class="bt">ComponentRobotinoIRServer:</text>
<text x="413" y="766.2" class="bt">ComponentRobotinoIRServer</text>
<rect x="346" y="890" width="268" height="171" fill="#d8d6de"/>
<rect x="344.5" y="888.5" width="268" height="171" fill="url(#yg)" stroke="#666" stroke-width="1"/>
<path d="M612,889 V1059 H345" fill="none" stroke="#747050" stroke-width="2"/>
<g transform="translate(398,897)"><path d="M8,2 V0.5 H0.5 V8.5 H8 V7" fill="none" stroke="#222" stroke-width="1"/><rect x="6.5" y="2.2" width="3.2" height="1.8" fill="#fff" stroke="#222" stroke-width="0.9"/><rect x="6.5" y="5.2" width="3.2" height="1.8" fill="#fff" stroke="#222" stroke-width="0.9"/></g>
<text x="412" y="899.2" class="bt">ComponentFestoMPSDocking:</text>
<text x="412" y="910.2" class="bt">ComponentFestoMPSDocking</text>
<rect x="751" y="836" width="116.5" height="126" fill="#d8d6de"/>
<rect x="749.5" y="834.5" width="116.5" height="126" fill="url(#yg)" stroke="#666" stroke-width="1"/>
<path d="M865.5,835 V960 H750" fill="none" stroke="#747050" stroke-width="2"/>
<g transform="translate(773,843)"><path d="M8,2 V0.5 H0.5 V8.5 H8 V7" fill="none" stroke="#222" stroke-width="1"/><rect x="6.5" y="2.2" width="3.2" height="1.8" fill="#fff" stroke="#222" stroke-width="0.9"/><rect x="6.5" y="5.2" width="3.2" height="1.8" fill="#fff" stroke="#222" stroke-width="0.9"/></g>
<text x="786" y="845.2" class="bt">SmartAmcl:</text>
<text x="786" y="856.2" class="bt">SmartAmcl</text>
<rect x="1012" y="836" width="152.5" height="108" fill="#d8d6de"/>
<rect x="1010.5" y="834.5" width="152.5" height="108" fill="url(#yg)" stroke="#666" stroke-width="1"/>
<path d="M1162.5,835 V942 H1011" fill="none" stroke="#747050" stroke-width="2"/>
<g transform="translate(1040,843)"><path d="M8,2 V0.5 H0.5 V8.5 H8 V7" fill="none" stroke="#222" stroke-width="1"/><rect x="6.5" y="2.2" width="3.2" height="1.8" fill="#fff" stroke="#222" stroke-width="0.9"/><rect x="6.5" y="5.2" width="3.2" height="1.8" fill="#fff" stroke="#222" stroke-width="0.9"/></g>
<text x="1053" y="845.2" class="bt">SmartGMapping:</text>
<text x="1053" y="856.2" class="bt">SmartGMapping</text>
<rect x="1012" y="972" width="152.5" height="88" fill="#d8d6de"/>
<rect x="1010.5" y="970.5" width="152.5" height="88" fill="url(#yg)" stroke="#666" stroke-width="1"/>
<path d="M1162.5,971 V1058 H1011" fill="none" stroke="#747050" stroke-width="2"/>
<g transform="translate(1019,978)"><path d="M8,2 V0.5 H0.5 V8.5 H8 V7" fill="none" stroke="#222" stroke-width="1"/><rect x="6.5" y="2.2" width="3.2" height="1.8" fill="#fff" stroke="#222" stroke-width="0.9"/><rect x="6.5" y="5.2" width="3.2" height="1.8" fill="#fff" stroke="#222" stroke-width="0.9"/></g>
<text x="1033" y="980.2" class="bt">ComponentLaserLMS1xx:</text>
<text x="1033" y="991.2" class="bt">ComponentLaserLMS1xx</text>
<rect x="1300" y="665" width="162" height="51" fill="#d8d6de"/>
<rect x="1298.5" y="663.5" width="162" height="51" fill="url(#yg)" stroke="#666" stroke-width="1"/>
<path d="M1460,664 V714 H1299" fill="none" stroke="#747050" stroke-width="2"/>
<g transform="translate(1316,672)"><path d="M8,2 V0.5 H0.5 V8.5 H8 V7" fill="none" stroke="#222" stroke-width="1"/><rect x="6.5" y="2.2" width="3.2" height="1.8" fill="#fff" stroke="#222" stroke-width="0.9"/><rect x="6.5" y="5.2" width="3.2" height="1.8" fill="#fff" stroke="#222" stroke-width="0.9"/></g>
<text x="1331" y="674.2" class="bt">ComponentSkillServer:</text>
<text x="1331" y="685.2" class="bt">ComponentSkillServer</text>
<rect x="1300" y="735" width="162" height="63" fill="#d8d6de"/>
<rect x="1298.5" y="733.5" width="162" height="63" fill="url(#yg)" stroke="#666" stroke-width="1"/>
<path d="M1460,734 V796 H1299" fill="none" stroke="#747050" stroke-width="2"/>
<g transform="translate(1303,742)"><path d="M8,2 V0.5 H0.5 V8.5 H8 V7" fill="none" stroke="#222" stroke-width="1"/><rect x="6.5" y="2.2" width="3.2" height="1.8" fill="#fff" stroke="#222" stroke-width="0.9"/><rect x="6.5" y="5.2" width="3.2" height="1.8" fill="#fff" stroke="#222" stroke-width="0.9"/></g>
<text x="1317" y="744.2" class="bt">ComponentSymbolicPlanner:</text>
<text x="1317" y="755.2" class="bt">ComponentSymbolicPlanner</text>
<rect x="1300" y="812" width="162" height="108" fill="#d8d6de"/>
<rect x="1298.5" y="810.5" width="162" height="108" fill="url(#yg)" stroke="#666" stroke-width="1"/>
<path d="M1460,811 V918 H1299" fill="none" stroke="#747050" stroke-width="2"/>
<g transform="translate(1320,819)"><path d="M8,2 V0.5 H0.5 V8.5 H8 V7" fill="none" stroke="#222" stroke-width="1"/><rect x="6.5" y="2.2" width="3.2" height="1.8" fill="#fff" stroke="#222" stroke-width="0.9"/><rect x="6.5" y="5.2" width="3.2" height="1.8" fill="#fff" stroke="#222" stroke-width="0.9"/></g>
<text x="1334" y="821.2" class="bt">ComponentSimpleKB:</text>
<text x="1334" y="832.2" class="bt">ComponentSimpleKB</text>
<polyline points="629,225 786,225" fill="none" stroke="#8e8e8e" stroke-width="1.6"/>
<polyline points="629,348 1030,348 1030,433 1035,433" fill="none" stroke="#8e8e8e" stroke-width="1.6"/>
<polyline points="629,403 740.5,403 740.5,507 786,507" fill="none" stroke="#8e8e8e" stroke-width="1.6"/>
<polyline points="363,403 335.5,403 335.5,1068 947.5,1068 947.5,1029.5 993,1029.5" fill="none" stroke="#8e8e8e" stroke-width="1.6"/>
<polyline points="1035,198.5 1182,198.5" fill="none" stroke="#8e8e8e" stroke-width="1.6"/>
<polyline points="1035,241.5 1082.5,241.5 1082.5,359 1182,358" fill="none" stroke="#8e8e8e" stroke-width="1.6"/>
<polyline points="1035,277 1055.5,277 1055.5,432 1035,432" fill="none" stroke="#8e8e8e" stroke-width="1.6"/>
<polyline points="1182,223.5 1154,223.5 1154,352 1182,351.5" fill="none" stroke="#8e8e8e" stroke-width="1.6"/>
<polyline points="1422,223 1515,223" fill="none" stroke="#8e8e8e" stroke-width="1.6"/>
<polyline points="1422,259 1433.5,259 1433.5,438 1035,438" fill="none" stroke="#8e8e8e" stroke-width="1.6"/>
<polyline points="1521,266 1514.5,266 1514.5,1068 973,1068 973,1032 993,1032" fill="none" stroke="#8e8e8e" stroke-width="1.6"/>
<polyline points="1182,387 1119.5,387 1119.5,435 1035,435" fill="none" stroke="#8e8e8e" stroke-width="1.6"/>
<polyline points="1035,443 1244.5,443 1244.5,1014 1179,1014" fill="none" stroke="#8e8e8e" stroke-width="1.6"/>
<polyline points="1035,445 1136.5,445 1136.5,816 740.5,816 740.5,992 629,992" fill="none" stroke="#8e8e8e" stroke-width="1.6"/>
<polyline points="1035,447.5 1127.5,447.5 1127.5,807.5 731,807.5 731,836 629,836" fill="none" stroke="#8e8e8e" stroke-width="1.6"/>
<polyline points="1035,449.5 1109.8,449.5 1109.8,660 629,660" fill="none" stroke="#8e8e8e" stroke-width="1.6"/>
<polyline points="786,430 641.5,430 641.5,544 629,544" fill="none" stroke="#8e8e8e" stroke-width="1.6"/>
<polyline points="786,512 704.3,512 704.3,627 629,627" fill="none" stroke="#8e8e8e" stroke-width="1.6"/>
<polyline points="786,515 713,515 713,956 629,956" fill="none" stroke="#8e8e8e" stroke-width="1.6"/>
<polyline points="629,699 641.75,699 641.75,792.5 629,792.5" fill="none" stroke="#8e8e8e" stroke-width="1.6"/>
<polyline points="629,795 641.75,795 641.75,926 629,926" fill="none" stroke="#8e8e8e" stroke-width="1.6"/>
<polyline points="629,1023 993,1023" fill="none" stroke="#8e8e8e" stroke-width="1.6"/>
<polyline points="911.5,552 911.5,872 882,872" fill="none" stroke="#8e8e8e" stroke-width="1.6"/>
<polyline points="974.5,552 974.5,906 882,906" fill="none" stroke="#8e8e8e" stroke-width="1.6"/>
<polyline points="983,552 983,875 993,875" fill="none" stroke="#8e8e8e" stroke-width="1.6"/>
<polyline points="882,942 938,942 938,1018.5 993,1018.5" fill="none" stroke="#8e8e8e" stroke-width="1.6"/>
<polyline points="993,918.5 974.7,918.5 974.7,1014.5 993,1014.5" fill="none" stroke="#8e8e8e" stroke-width="1.6"/>
<rect x="607.7" y="213.7" width="20.6" height="20.6" fill="#fff" stroke="#000" stroke-width="2.2"/>
<polygon points="610.5,216.5 625.5,216.5 618.5,224.0 625.5,231.5 610.5,231.5" fill="#000"/>
<rect x="607.7" y="339.7" width="20.6" height="20.6" fill="#fff" stroke="#000" stroke-width="2" stroke-dasharray="1.6 1.1"/>
<polygon points="610.5,342.5 625.5,342.5 618.5,350.0 625.5,357.5 610.5,357.5" fill="#000"/>
<rect x="607.7" y="393.7" width="20.6" height="20.6" fill="#fff" stroke="#000" stroke-width="2" stroke-dasharray="1.6 1.1"/>
<polygon points="610.5,396.5 618.5,396.5 625.5,404.0 618.5,411.5 610.5,411.5" fill="#000"/>
<rect x="363.7" y="393.7" width="20.6" height="20.6" fill="#fff" stroke="#000" stroke-width="2" stroke-dasharray="1.6 1.1"/>
<polygon points="366.5,396.5 381.5,396.5 381.5,411.5 366.5,411.5 373.5,404.0" fill="#000"/>
<rect x="1013.7" y="186.7" width="20.6" height="20.6" fill="#fff" stroke="#000" stroke-width="2" stroke-dasharray="1.6 1.1"/>
<polygon points="1016.5,189.5 1031.5,189.5 1024.5,197.0 1031.5,204.5 1016.5,204.5" fill="#000"/>
<rect x="786.7" y="213.7" width="20.6" height="20.6" fill="#fff" stroke="#000" stroke-width="2" stroke-dasharray="1.6 1.1"/>
<polygon points="789.5,224.0 796.5,216.5 804.5,216.5 804.5,231.5 796.5,231.5" fill="#000"/>
<rect x="1013.7" y="230.7" width="20.6" height="20.6" fill="#fff" stroke="#000" stroke-width="2" stroke-dasharray="1.6 1.1"/>
<polygon points="1016.5,233.5 1031.5,233.5 1024.5,241.0 1031.5,248.5 1016.5,248.5" fill="#000"/>
<rect x="1013.7" y="266.7" width="20.6" height="20.6" fill="#fff" stroke="#000" stroke-width="2" stroke-dasharray="1.6 1.1"/>
<polygon points="1016.5,269.5 1031.5,269.5 1024.5,277.0 1031.5,284.5 1016.5,284.5" fill="#000"/>
<rect x="1182.7" y="189.7" width="20.6" height="20.6" fill="#fff" stroke="#000" stroke-width="2.2"/>
<polygon points="1185.5,200.0 1192.5,192.5 1200.5,192.5 1200.5,207.5 1192.5,207.5" fill="#000"/>
<rect x="1182.7" y="213.7" width="20.6" height="20.6" fill="#fff" stroke="#000" stroke-width="2" stroke-dasharray="1.6 1.1"/>
<polygon points="1185.5,216.5 1200.5,216.5 1200.5,231.5 1185.5,231.5 1192.5,224.0" fill="#000"/>
<rect x="1400.7" y="213.7" width="20.6" height="20.6" fill="#fff" stroke="#000" stroke-width="2" stroke-dasharray="1.6 1.1"/>
<polygon points="1403.5,216.5 1418.5,216.5 1411.5,224.0 1418.5,231.5 1403.5,231.5" fill="#000"/>
<rect x="1400.7" y="249.7" width="20.6" height="20.6" fill="#fff" stroke="#000" stroke-width="2" stroke-dasharray="1.6 1.1"/>
<polygon points="1403.5,252.5 1418.5,252.5 1411.5,260.0 1418.5,267.5 1403.5,267.5" fill="#000"/>
<rect x="1515.7" y="213.7" width="20.6" height="20.6" fill="#fff" stroke="#000" stroke-width="2.2"/>
<polygon points="1518.5,224.0 1525.5,216.5 1533.5,216.5 1533.5,231.5 1525.5,231.5" fill="#000"/>
<rect x="1515.7" y="249.7" width="20.6" height="20.6" fill="#fff" stroke="#000" stroke-width="2" stroke-dasharray="1.6 1.1"/>
<polygon points="1518.5,252.5 1533.5,252.5 1533.5,267.5 1518.5,267.5 1525.5,260.0" fill="#000"/>
<rect x="1182.7" y="347.7" width="20.6" height="20.6" fill="#fff" stroke="#000" stroke-width="2.2"/>
<polygon points="1185.5,358.0 1192.5,350.5 1200.5,350.5 1200.5,365.5 1192.5,365.5" fill="#000"/>
<rect x="1182.7" y="375.7" width="20.6" height="20.6" fill="#fff" stroke="#000" stroke-width="2" stroke-dasharray="1.6 1.1"/>
<polygon points="1185.5,378.5 1200.5,378.5 1200.5,393.5 1185.5,393.5 1192.5,386.0" fill="#000"/>
<rect x="786.7" y="420.7" width="20.6" height="20.6" fill="#fff" stroke="#000" stroke-width="2.2"/>
<path d="M793,426.5 H800 Q803,426.5 803,430 Q803,433.5 800,433.5 H792" fill="none" stroke="#000" stroke-width="1.5"/>
<path d="M794.5,430.5 L791.5,433.5 L794.5,436.5" fill="none" stroke="#000" stroke-width="1.5"/>
<circle cx="802.5" cy="430" r="1.2" fill="#3cb03c"/>
<rect x="786.7" y="501.7" width="20.6" height="20.6" fill="#fff" stroke="#000" stroke-width="2.2"/>
<polygon points="789.5,504.5 804.5,504.5 804.5,519.5 789.5,519.5 796.5,512.0" fill="#000"/>
<rect x="1013.7" y="428.2" width="20.6" height="20.6" fill="#fff" stroke="#000" stroke-width="2.2"/>
<polygon points="1016.5,431.0 1024.5,431.0 1031.5,438.5 1024.5,446.0 1016.5,446.0" fill="#000"/>
<rect x="902.7" y="530.7" width="20.6" height="20.6" fill="#fff" stroke="#000" stroke-width="2" stroke-dasharray="1.6 1.1"/>
<polygon points="905.5,533.5 920.5,533.5 920.5,548.5 913.0,541.5 905.5,548.5" fill="#000"/>
<rect x="965.7" y="530.7" width="20.6" height="20.6" fill="#fff" stroke="#000" stroke-width="2.2"/>
<polygon points="968.5,533.5 983.5,533.5 983.5,548.5 976.0,541.5 968.5,548.5" fill="#000"/>
<rect x="607.7" y="532.7" width="20.6" height="20.6" fill="#fff" stroke="#000" stroke-width="2" stroke-dasharray="1.6 1.1"/>
<path d="M614,538.5 H621 Q624,538.5 624,542 Q624,545.5 621,545.5 H613" fill="none" stroke="#000" stroke-width="1.5"/>
<path d="M615.5,542.5 L612.5,545.5 L615.5,548.5" fill="none" stroke="#000" stroke-width="1.5"/>
<circle cx="623.5" cy="542" r="1.2" fill="#e0701e"/>
<rect x="607.7" y="618.7" width="20.6" height="20.6" fill="#fff" stroke="#000" stroke-width="2" stroke-dasharray="1.6 1.1"/>
<polygon points="610.5,621.5 618.5,621.5 625.5,629.0 618.5,636.5 610.5,636.5" fill="#000"/>
<rect x="607.7" y="654.7" width="20.6" height="20.6" fill="#fff" stroke="#000" stroke-width="2" stroke-dasharray="1.6 1.1"/>
<polygon points="610.5,657.5 625.5,657.5 618.5,665.0 625.5,672.5 610.5,672.5" fill="#000"/>
<rect x="607.7" y="690.7" width="20.6" height="20.6" fill="#fff" stroke="#000" stroke-width="2" stroke-dasharray="1.6 1.1"/>
<polygon points="610.5,693.5 625.5,693.5 618.5,701.0 625.5,708.5 610.5,708.5" fill="#000"/>
<rect x="607.7" y="780.7" width="20.6" height="20.6" fill="#fff" stroke="#000" stroke-width="2.2"/>
<polygon points="610.5,783.5 618.5,783.5 625.5,791.0 618.5,798.5 610.5,798.5" fill="#000"/>
<rect x="607.7" y="825.7" width="20.6" height="20.6" fill="#fff" stroke="#000" stroke-width="2" stroke-dasharray="1.6 1.1"/>
<polygon points="610.5,828.5 625.5,828.5 618.5,836.0 625.5,843.5 610.5,843.5" fill="#000"/>
<rect x="607.7" y="915.7" width="20.6" height="20.6" fill="#fff" stroke="#000" stroke-width="2" stroke-dasharray="1.6 1.1"/>
<polygon points="610.5,918.5 625.5,918.5 618.5,926.0 625.5,933.5 610.5,933.5" fill="#000"/>
<rect x="607.7" y="947.7" width="20.6" height="20.6" fill="#fff" stroke="#000" stroke-width="2" stroke-dasharray="1.6 1.1"/>
<polygon points="610.5,950.5 618.5,950.5 625.5,958.0 618.5,965.5 610.5,965.5" fill="#000"/>
<rect x="607.7" y="983.7" width="20.6" height="20.6" fill="#fff" stroke="#000" stroke-width="2" stroke-dasharray="1.6 1.1"/>
<polygon points="610.5,986.5 625.5,986.5 618.5,994.0 625.5,1001.5 610.5,1001.5" fill="#000"/>
<rect x="607.7" y="1019.7" width="20.6" height="20.6" fill="#fff" stroke="#000" stroke-width="2" stroke-dasharray="1.6 1.1"/>
<polygon points="610.5,1022.5 625.5,1022.5 618.5,1030.0 625.5,1037.5 610.5,1037.5" fill="#000"/>
<rect x="860.7" y="861.7" width="20.6" height="20.6" fill="#fff" stroke="#000" stroke-width="2.2"/>
<polygon points="863.5,864.5 871.5,864.5 878.5,872.0 871.5,879.5 863.5,879.5" fill="#000"/>
<rect x="860.7" y="896.2" width="20.6" height="20.6" fill="#fff" stroke="#000" stroke-width="2" stroke-dasharray="1.6 1.1"/>
<polygon points="863.5,899.0 871.5,899.0 878.5,906.5 871.5,914.0 863.5,914.0" fill="#000"/>
<rect x="860.7" y="929.2" width="20.6" height="20.6" fill="#fff" stroke="#000" stroke-width="2" stroke-dasharray="1.6 1.1"/>
<polygon points="863.5,932.0 878.5,932.0 871.5,939.5 878.5,947.0 863.5,947.0" fill="#000"/>
<rect x="994.2" y="864.7" width="20.6" height="20.6" fill="#fff" stroke="#000" stroke-width="2" stroke-dasharray="1.6 1.1"/>
<polygon points="997.0,875.0 1004.0,867.5 1012.0,867.5 1012.0,882.5 1004.0,882.5" fill="#000"/>
<rect x="994.2" y="900.7" width="20.6" height="20.6" fill="#fff" stroke="#000" stroke-width="2" stroke-dasharray="1.6 1.1"/>
<polygon points="997.0,903.5 1012.0,903.5 1012.0,918.5 997.0,918.5 1004.0,911.0" fill="#000"/>
<rect x="994.2" y="1014.7" width="20.6" height="20.6" fill="#fff" stroke="#000" stroke-width="2.2"/>
<polygon points="997.0,1025.0 1004.0,1017.5 1012.0,1017.5 1012.0,1032.5 1004.0,1032.5" fill="#000"/>
<rect x="1157.7" y="1005.7" width="20.6" height="20.6" fill="#fff" stroke="#000" stroke-width="2" stroke-dasharray="1.6 1.1"/>
<polygon points="1160.5,1008.5 1175.5,1008.5 1168.5,1016.0 1175.5,1023.5 1160.5,1023.5" fill="#000"/>
<rect x="1282.2" y="761.2" width="20.6" height="20.6" fill="#fff" stroke="#000" stroke-width="2.2"/>
<path d="M1288.5,767.0 H1295.5 Q1298.5,767.0 1298.5,770.5 Q1298.5,774.0 1295.5,774.0 H1287.5" fill="none" stroke="#000" stroke-width="1.5"/>
<path d="M1290.0,771.0 L1287.0,774.0 L1290.0,777.0" fill="none" stroke="#000" stroke-width="1.5"/>
<circle cx="1298.0" cy="770.5" r="1.2" fill="#3cb03c"/>
<rect x="1282.2" y="833.7" width="20.6" height="20.6" fill="#fff" stroke="#000" stroke-width="2.2"/>
<path d="M1288.5,839.5 H1295.5 Q1298.5,839.5 1298.5,843 Q1298.5,846.5 1295.5,846.5 H1287.5" fill="none" stroke="#000" stroke-width="1.5"/>
<path d="M1290.0,843.5 L1287.0,846.5 L1290.0,849.5" fill="none" stroke="#000" stroke-width="1.5"/>
<circle cx="1298.0" cy="843" r="1.2" fill="#3cb03c"/>
<rect x="1282.2" y="857.2" width="20.6" height="20.6" fill="#fff" stroke="#000" stroke-width="2.2"/>
<polygon points="1285.0,867.5 1292.0,860.0 1300.0,860.0 1300.0,875.0 1292.0,875.0" fill="#000"/>
<rect x="1282.2" y="884.2" width="20.6" height="20.6" fill="#fff" stroke="#000" stroke-width="2" stroke-dasharray="1.6 1.1"/>
<polygon points="1285.0,887.0 1300.0,887.0 1300.0,902.0 1285.0,902.0 1292.0,894.5" fill="#000"/>
<text x="602" y="227" text-anchor="end" class="pl">NavVelSendServer</text>
<text x="603" y="352" text-anchor="end" class="pl">BaseStateClient</text>
<text x="603" y="406" text-anchor="end" class="pl">NavVelSendClient</text>
<text x="386" y="403" text-anchor="start" class="pl">LaserClient</text>
<text x="1009" y="200" text-anchor="end" class="pl">CommPlannerGoalListServiceIn</text>
<text x="809" y="223" text-anchor="start" class="pl">NavigationVelocityServiceOut</text>
<text x="1009" y="244" text-anchor="end" class="pl">PathNavigationGoalServiceIn</text>
<text x="1007" y="280" text-anchor="end" class="pl">BaseStateServiceIn</text>
<text x="1205" y="200" text-anchor="start" class="pl">PlannerGoalServiceOut</text>
<text x="1205" y="223" text-anchor="start" class="pl">PathNavigationGoalServiceIn</text>
<text x="1398" y="233" text-anchor="end" class="pl">CurrGridMapPushServiceIn</text>
<text x="1394" y="262" text-anchor="end" class="pl">BaseStateServiceIn</text>
<text x="1538" y="223" text-anchor="start" class="pl">CurrMapOut</text>
<text x="1538" y="259" text-anchor="start" class="pl">LaserServiceIn</text>
<text x="1205" y="358" text-anchor="start" class="pl">PathNavigationGoalServiceOut</text>
<text x="1205" y="385" text-anchor="start" class="pl">BaseStateServiceIn</text>
<text x="809" y="430" text-anchor="start" class="pl">CommRobotinoIOValuesQueryServiceAnsw</text>
<text x="1008" y="445" text-anchor="end" class="pl">BaseStateServiceOut</text>
<text x="809" y="511" text-anchor="start" class="pl">NavigationVelocityServiceIn</text>
<text x="925" y="541" text-anchor="start" class="pl">LocalizationEventServiceIn</text>
<text x="988" y="541" text-anchor="start" class="pl">LocalizationUpdateServiceIn</text>
<text x="542" y="529" text-anchor="start" class="pl">CommRobotinoIOValuesQueryServiceReq</text>
<text x="604" y="631" text-anchor="end" class="pl">NavigationVelocityServiceOut</text>
<text x="602" y="667" text-anchor="end" class="pl">BaseStateServiceIn</text>
<text x="607" y="706" text-anchor="end" class="pl">CommMobIRIn</text>
<text x="607" y="793" text-anchor="end" class="pl">CommMobIROut</text>
<text x="602" y="838" text-anchor="end" class="pl">BaseStateServiceIn</text>
<text x="607" y="928" text-anchor="end" class="pl">CommMobIRIn</text>
<text x="604" y="961" text-anchor="end" class="pl">NavigationVelocityServiceOut</text>
<text x="602" y="997" text-anchor="end" class="pl">BaseStateServiceIn</text>
<text x="603" y="1033" text-anchor="end" class="pl">LaserServiceIn</text>
<text x="856" y="877" text-anchor="end" class="pl">LocalizationEventServiceOut</text>
<text x="856" y="909" text-anchor="end" class="pl">LocalizationUpdateServiceOut</text>
<text x="855" y="942" text-anchor="end" class="pl">LaserServiceIn</text>
<text x="1016" y="874" text-anchor="start" class="pl">LocalizationUpdateServiceOut</text>
<text x="1016" y="920" text-anchor="start" class="pl">LaserServiceIn</text>
<text x="1016" y="1024" text-anchor="start" class="pl">LaserServiceOut</text>
<text x="1152" y="1018" text-anchor="end" class="pl">BaseStateServiceIn</text>
<text x="1304" y="774" text-anchor="start" class="pl">SymbolicPlannerQueryServer</text>
<text x="1304" y="844" text-anchor="start" class="pl">CommKBQueryAnsw</text>
<text x="1304" y="867" text-anchor="start" class="pl">CommKBEventOut</text>
<text x="1304" y="894" text-anchor="start" class="pl">CommKBEventIn</text>
<g transform="translate(659,212.5)"><rect x="0.9" y="0.9" width="10.2" height="7.6" fill="#fff" stroke="#000" stroke-width="1.8"/><path d="M2,2 L6,5.6 L10,2" fill="none" stroke="#000" stroke-width="1"/></g>
<text x="673" y="220" class="pl">CommNavigationVelocity</text>
<g transform="translate(1043,176.5)"><rect x="0.9" y="0.9" width="10.2" height="7.6" fill="#fff" stroke="#000" stroke-width="1.8"/><path d="M2,2 L6,5.6 L10,2" fill="none" stroke="#000" stroke-width="1"/></g>
<text x="1057" y="184" class="pl">CommPlannerGoalList</text>
<g transform="translate(1038,231.5)"><rect x="0.9" y="0.9" width="10.2" height="7.6" fill="#fff" stroke="#000" stroke-width="1.8"/><path d="M2,2 L6,5.6 L10,2" fill="none" stroke="#000" stroke-width="1"/></g>
<text x="1052" y="239" class="pl">CommPathNavigationGoal</text>
<g transform="translate(1136,292.5)"><rect x="0.9" y="0.9" width="10.2" height="7.6" fill="#fff" stroke="#000" stroke-width="1.8"/><path d="M2,2 L6,5.6 L10,2" fill="none" stroke="#000" stroke-width="1"/></g>
<text x="1150" y="300" class="pl">CommPathNavigationGoal</text>
<g transform="translate(1433,211.5)"><rect x="0.9" y="0.9" width="10.2" height="7.6" fill="#fff" stroke="#000" stroke-width="1.8"/><path d="M2,2 L6,5.6 L10,2" fill="none" stroke="#000" stroke-width="1"/></g>
<text x="1447" y="219" class="pl">CommGridMap</text>
<g transform="translate(840,329.5)"><rect x="0.9" y="0.9" width="10.2" height="7.6" fill="#fff" stroke="#000" stroke-width="1.8"/><path d="M2,2 L6,5.6 L10,2" fill="none" stroke="#000" stroke-width="1"/></g>
<text x="854" y="337" class="pl">CommBaseState</text>
<g transform="translate(993,318.5)"><rect x="0.9" y="0.9" width="10.2" height="7.6" fill="#fff" stroke="#000" stroke-width="1.8"/><path d="M2,2 L6,5.6 L10,2" fill="none" stroke="#000" stroke-width="1"/></g>
<text x="1007" y="326" class="pl">CommBaseState</text>
<g transform="translate(682,387.5)"><rect x="0.9" y="0.9" width="10.2" height="7.6" fill="#fff" stroke="#000" stroke-width="1.8"/><path d="M2,2 L6,5.6 L10,2" fill="none" stroke="#000" stroke-width="1"/></g>
<text x="696" y="395" class="pl">CommNavigationVelocity</text>
<g transform="translate(1082,411.5)"><rect x="0.9" y="0.9" width="10.2" height="7.6" fill="#fff" stroke="#000" stroke-width="1.8"/><path d="M2,2 L6,5.6 L10,2" fill="none" stroke="#000" stroke-width="1"/></g>
<text x="1096" y="419" class="pl">CommBaseState</text>
<g transform="translate(1310,425.0)"><rect x="0.9" y="0.9" width="10.2" height="7.6" fill="#fff" stroke="#000" stroke-width="1.8"/><path d="M2,2 L6,5.6 L10,2" fill="none" stroke="#000" stroke-width="1"/></g>
<text x="1324" y="432.5" class="pl">CommBaseState</text>
<g transform="translate(458,466.0)"><rect x="0.9" y="0.9" width="10.2" height="7.6" fill="#fff" stroke="#000" stroke-width="1.8"/><path d="M2,2 L6,5.6 L10,2" fill="none" stroke="#000" stroke-width="1"/></g>
<text x="472" y="473.5" class="pl">R=CommRobotinoIOValues / A=CommRobotinoIOValues</text>
<g transform="translate(686,587.5)"><rect x="0.9" y="0.9" width="10.2" height="7.6" fill="#fff" stroke="#000" stroke-width="1.8"/><path d="M2,2 L6,5.6 L10,2" fill="none" stroke="#000" stroke-width="1"/></g>
<text x="700" y="595" class="pl">CommNavigationVelocity</text>
<g transform="translate(713,615.5)"><rect x="0.9" y="0.9" width="10.2" height="7.6" fill="#fff" stroke="#000" stroke-width="1.8"/><path d="M2,2 L6,5.6 L10,2" fill="none" stroke="#000" stroke-width="1"/></g>
<text x="727" y="623" class="pl">CommNavigationVelocity</text>
<g transform="translate(770,646.5)"><rect x="0.9" y="0.9" width="10.2" height="7.6" fill="#fff" stroke="#000" stroke-width="1.8"/><path d="M2,2 L6,5.6 L10,2" fill="none" stroke="#000" stroke-width="1"/></g>
<text x="784" y="654" class="pl">CommBaseState</text>
<g transform="translate(1204,631.5)"><rect x="0.9" y="0.9" width="10.2" height="7.6" fill="#fff" stroke="#000" stroke-width="1.8"/><path d="M2,2 L6,5.6 L10,2" fill="none" stroke="#000" stroke-width="1"/></g>
<text x="1218" y="639" class="pl">CommBaseState</text>
<g transform="translate(830,708.5)"><rect x="0.9" y="0.9" width="10.2" height="7.6" fill="#fff" stroke="#000" stroke-width="1.8"/><path d="M2,2 L6,5.6 L10,2" fill="none" stroke="#000" stroke-width="1"/></g>
<text x="844" y="716" class="pl">CommLocalizationEventResult</text>
<g transform="translate(605,726.5)"><rect x="0.9" y="0.9" width="10.2" height="7.6" fill="#fff" stroke="#000" stroke-width="1.8"/><path d="M2,2 L6,5.6 L10,2" fill="none" stroke="#000" stroke-width="1"/></g>
<text x="619" y="734" class="pl">CommMobileIRScan</text>
<g transform="translate(982,735.5)"><rect x="0.9" y="0.9" width="10.2" height="7.6" fill="#fff" stroke="#000" stroke-width="1.8"/><path d="M2,2 L6,5.6 L10,2" fill="none" stroke="#000" stroke-width="1"/></g>
<text x="996" y="743" class="pl">CommBasePositionUpdate</text>
<g transform="translate(956,778.0)"><rect x="0.9" y="0.9" width="10.2" height="7.6" fill="#fff" stroke="#000" stroke-width="1.8"/><path d="M2,2 L6,5.6 L10,2" fill="none" stroke="#000" stroke-width="1"/></g>
<text x="970" y="785.5" class="pl">CommBasePositionUpdate</text>
<g transform="translate(1030,795.0)"><rect x="0.9" y="0.9" width="10.2" height="7.6" fill="#fff" stroke="#000" stroke-width="1.8"/><path d="M2,2 L6,5.6 L10,2" fill="none" stroke="#000" stroke-width="1"/></g>
<text x="1044" y="802.5" class="pl">CommBaseState</text>
<g transform="translate(1044,816.5)"><rect x="0.9" y="0.9" width="10.2" height="7.6" fill="#fff" stroke="#000" stroke-width="1.8"/><path d="M2,2 L6,5.6 L10,2" fill="none" stroke="#000" stroke-width="1"/></g>
<text x="1058" y="824" class="pl">CommBaseState</text>
<g transform="translate(587,870.5)"><rect x="0.9" y="0.9" width="10.2" height="7.6" fill="#fff" stroke="#000" stroke-width="1.8"/><path d="M2,2 L6,5.6 L10,2" fill="none" stroke="#000" stroke-width="1"/></g>
<text x="601" y="878" class="pl">CommMobileIRScan</text>
<g transform="translate(977,948.5)"><rect x="0.9" y="0.9" width="10.2" height="7.6" fill="#fff" stroke="#000" stroke-width="1.8"/><path d="M2,2 L6,5.6 L10,2" fill="none" stroke="#000" stroke-width="1"/></g>
<text x="991" y="956" class="pl">CommMobileLaserScan</text>
<g transform="translate(1463,954.0)"><rect x="0.9" y="0.9" width="10.2" height="7.6" fill="#fff" stroke="#000" stroke-width="1.8"/><path d="M2,2 L6,5.6 L10,2" fill="none" stroke="#000" stroke-width="1"/></g>
<text x="1477" y="961.5" class="pl">CommMobileLaserScan</text>
<g transform="translate(866,985.5)"><rect x="0.9" y="0.9" width="10.2" height="7.6" fill="#fff" stroke="#000" stroke-width="1.8"/><path d="M2,2 L6,5.6 L10,2" fill="none" stroke="#000" stroke-width="1"/></g>
<text x="880" y="993" class="pl">CommMobileLaserScan</text>
<g transform="translate(759,1010.5)"><rect x="0.9" y="0.9" width="10.2" height="7.6" fill="#fff" stroke="#000" stroke-width="1.8"/><path d="M2,2 L6,5.6 L10,2" fill="none" stroke="#000" stroke-width="1"/></g>
<text x="773" y="1018" class="pl">CommMobileLaserScan</text>
<g transform="translate(767,1053.5)"><rect x="0.9" y="0.9" width="10.2" height="7.6" fill="#fff" stroke="#000" stroke-width="1.8"/><path d="M2,2 L6,5.6 L10,2" fill="none" stroke="#000" stroke-width="1"/></g>
<text x="781" y="1061" class="pl">CommMobileLaserScan</text>
</svg><div class="a" style="left:1744px;top:121px;width:136px;height:1004px;background:#ffffff;border-left:1px solid #b8b8b8;border-bottom-right-radius:6px"></div>
<div class="a" style="left:1745px;top:122px;width:134px;height:26px;background:linear-gradient(#fafafa,#f0f0f0)"></div>
<div class="a" style="left:1745px;top:146px;width:134px;height:2px;background:#d4d4d4"></div>
<svg class="a" style="left:1749px;top:126px;" width="16" height="17" viewBox="0 0 16 17"><circle cx="8" cy="8.5" r="7.5" fill="#eef0f8" stroke="#a8b0c8"/><circle cx="5.5" cy="4.5" r="1.3" fill="#f0b000"/><circle cx="9" cy="4" r="1.3" fill="#40b040"/><circle cx="12" cy="7" r="1.3" fill="#40a040"/><circle cx="4" cy="8" r="1.3" fill="#f08000"/><circle cx="6" cy="11.5" r="1.3" fill="#e02020"/><circle cx="9.5" cy="11.5" r="1.3" fill="#2050d0"/></svg>
<div class="t" style="left:1767px;top:126.2px;font-size:15.5px;line-height:18.6px;color:#303030;font-weight:normal;">Palette</div>
<svg class="a" style="left:1860px;top:130px;" width="8" height="12" viewBox="0 0 8 12"><path d="M1,1 L7,6 L1,11Z" fill="#fff" stroke="#000" stroke-width="1.2"/></svg>
<div class="a" style="left:1745px;top:148px;width:134px;height:24px;background:#f0f0f0"></div>
<div class="a" style="left:1745px;top:170px;width:134px;height:2px;background:#d4d4d4"></div>
<div class="a" style="left:1747px;top:150px;width:18px;height:19px;background:#f8f8f8;border-left:1px solid #c0c0c0;border-top:1px solid #e0e0e0"></div>
<svg class="a" style="left:1751px;top:151px;" width="11" height="16" viewBox="0 0 11 16"><path d="M1,1 L1,13 L4,10 L7,15 L9,14 L6,9 L10,9Z" fill="#fff8c0" stroke="#555" stroke-width="0.9"/></svg>
<svg class="a" style="left:1769px;top:152px;" width="14" height="14" viewBox="0 0 14 14"><circle cx="5.5" cy="5.5" r="4.5" fill="#fff" stroke="#4a6aa0"/><path d="M8.5,8.5 L13,13" stroke="#705030" stroke-width="1.8"/><path d="M3.5,5.5 H7.5 M5.5,3.5 V7.5" stroke="#2040c0" stroke-width="1.3"/></svg>
<svg class="a" style="left:1788px;top:152px;" width="14" height="14" viewBox="0 0 14 14"><circle cx="5.5" cy="5.5" r="4.5" fill="#fff" stroke="#4a6aa0"/><path d="M8.5,8.5 L13,13" stroke="#705030" stroke-width="1.8"/><path d="M3.5,5.5 H7.5" stroke="#2040c0" stroke-width="1.3"/></svg>
<svg class="a" style="left:1806px;top:153px;" width="15" height="11" viewBox="0 0 15 11"><path d="M0.5,0.5 H14.5 V7 L11,10.5 H0.5Z" fill="#f0e050" stroke="#b8a830"/></svg>
<svg class="a" style="left:1824px;top:157px;" width="6" height="4" viewBox="0 0 6 4"><path d="M0,0 H6 L3,3.5Z" fill="#222"/></svg>
<svg class="a" style="left:1837px;top:151px;" width="16" height="16" viewBox="0 0 16 16"><rect x="1" y="6" width="11" height="9" fill="#e8f0f8" stroke="#8aa8c8"/><path d="M7,9 L14,2" stroke="#3a9a3a" stroke-width="2.5"/></svg>
<svg class="a" style="left:1855px;top:157px;" width="6" height="4" viewBox="0 0 6 4"><path d="M0,0 H6 L3,3.5Z" fill="#222"/></svg>
<div class="a" style="left:1745px;top:173px;width:134px;height:22px;background:#ececec"></div>
<svg class="a" style="left:1747px;top:175px;" width="16" height="17" viewBox="0 0 16 17"><path d="M8,3 L3,8 V14 H13 V8Z" fill="none" stroke="#000" stroke-width="1"/><rect x="6" y="0.5" width="4" height="4" fill="#30d030" stroke="#000" stroke-width="0.8"/><rect x="0.5" y="12" width="4" height="4" fill="#30d030" stroke="#000" stroke-width="0.8"/><rect x="11.5" y="12" width="4" height="4" fill="#30d030" stroke="#000" stroke-width="0.8"/></svg>
<div class="t" style="left:1766px;top:174.9px;font-size:15.2px;line-height:18.2px;color:#303030;font-weight:normal;">System Tools</div>
<svg class="a" style="left:1864px;top:179px;" width="12" height="10" viewBox="0 0 12 10"><path d="M1,5 L4,1 H7 L11,5 L7,9 H4Z M4,3 L8,7 M8,3 L4,7" fill="none" stroke="#888" stroke-width="0.9"/></svg>
<svg class="a" style="left:1760px;top:199px;" width="16" height="16" viewBox="0 0 16 16"><path d="M8,1 V9" stroke="#000" stroke-width="2"/><path d="M4,6 L8,11 L12,6Z" fill="#000"/><path d="M1.5,10 V14.5 H14.5 V10" fill="none" stroke="#000" stroke-width="2"/></svg>
<div class="t" style="left:1780px;top:197.9px;font-size:15.2px;line-height:18.2px;color:#303030;font-weight:normal;">ImportCom...</div>
<svg class="a" style="left:1760px;top:223px;" width="16" height="16" viewBox="0 0 16 16"><path d="M12,4.5 V2.5 H0.8 V14 H12 V11.5" fill="none" stroke="#000" stroke-width="1.3"/><rect x="10" y="5" width="5" height="2.5" fill="#fff" stroke="#000"/><rect x="10" y="9" width="5" height="2.5" fill="#fff" stroke="#000"/></svg>
<div class="t" style="left:1780px;top:221.9px;font-size:15.2px;line-height:18.2px;color:#303030;font-weight:normal;">ComponentI...</div>
<svg class="a" style="left:1760px;top:247px;" width="16" height="16" viewBox="0 0 16 16"><path d="M2,15 L14,3 M10,3 H14 V7" fill="none" stroke="#000" stroke-width="1.3"/><path d="M1,3.5 H6 M3.5,1 V6" stroke="#000" stroke-width="1.2"/></svg>
<div class="t" style="left:1780px;top:245.9px;font-size:15.2px;line-height:18.2px;color:#303030;font-weight:normal;">Connection</div>
<svg class="a" style="left:1760px;top:271px;" width="16" height="16" viewBox="0 0 16 16"><rect x="1" y="1" width="14" height="14" fill="#fff" stroke="#000" stroke-width="1.6" stroke-dasharray="1.5 1"/><text x="4.2" y="12.5" font-size="11" font-family="Liberation Sans" fill="#000">R</text></svg>
<div class="t" style="left:1780px;top:269.9px;font-size:15.2px;line-height:18.2px;color:#303030;font-weight:normal;">RequiredSer...</div>
<svg class="a" style="left:1760px;top:295px;" width="16" height="16" viewBox="0 0 16 16"><rect x="1" y="1" width="14" height="14" fill="#fff" stroke="#000" stroke-width="1.6"/><text x="4.5" y="12.5" font-size="11" font-family="Liberation Sans" fill="#000">P</text></svg>
<div class="t" style="left:1780px;top:293.9px;font-size:15.2px;line-height:18.2px;color:#303030;font-weight:normal;">ProvidedSer...</div>
<svg class="a" style="left:1760px;top:319px;" width="16" height="16" viewBox="0 0 16 16"><path d="M3,1 V15 M8,1 V15 M13,1 V15" stroke="#000" stroke-width="2"/><path d="M1,4 H5 M6,11 H10 M11,6 H15" stroke="#000" stroke-width="2"/></svg>
<div class="t" style="left:1780px;top:317.9px;font-size:15.2px;line-height:18.2px;color:#303030;font-weight:normal;">ParameterS...</div>
<div class="a" style="left:1883px;top:93px;width:36px;height:171px;background:#e8e8e8;border:1px solid #c4c4c4;border-radius:0 0 6px 6px"></div>
<div class="a" style="left:1891px;top:98px;width:20px;height:2px;background:repeating-linear-gradient(90deg,#aaa 0 2px,transparent 2px 4px)"></div>
<svg class="a" style="left:1895px;top:110px;" width="12" height="10" viewBox="0 0 12 10"><rect x="4" y="1" width="7" height="5" fill="none" stroke="#444"/><rect x="1" y="4" width="7" height="5" fill="#e8e8e8" stroke="#444"/></svg>
<svg class="a" style="left:1893px;top:129px;" width="16" height="17" viewBox="0 0 16 17"><path d="M3,1 V16 M8,1 V16 M13,1 V16" stroke="#000" stroke-width="2.2"/><path d="M1,4 H5 M6,12 H10 M11,6 H15" stroke="#000" stroke-width="2.2"/></svg>
<svg class="a" style="left:1893px;top:150px;" width="15" height="16" viewBox="0 0 15 16"><path d="M1,1 H10 L14,4 V15 H1Z" fill="#e8eef8" stroke="#6a8ac8"/><circle cx="6" cy="5" r="2.5" fill="#e02020"/><path d="M3,13 L6,8 L9,13Z" fill="#f0a020"/></svg>
<svg class="a" style="left:1893px;top:173px;" width="15" height="14" viewBox="0 0 15 14"><rect x="1" y="1" width="13" height="12" fill="#fff" stroke="#5a7ab0"/><rect x="1" y="1" width="13" height="3" fill="#c8d8f0"/><path d="M1,7 H14 M1,10 H14 M5,4 V13" stroke="#7a9ac8" stroke-width="0.8"/></svg>
<svg class="a" style="left:1893px;top:195px;" width="16" height="17" viewBox="0 0 16 17"><path d="M3,1 V16 M8,1 V16 M13,1 V16" stroke="#000" stroke-width="2.2"/><path d="M1,4 H5 M6,12 H10 M11,6 H15" stroke="#000" stroke-width="2.2"/></svg>
<svg class="a" style="left:1893px;top:217px;" width="15" height="15" viewBox="0 0 15 15"><rect x="1" y="1" width="13" height="9" rx="1" fill="#e8f0fc" stroke="#3a70c0" stroke-width="1.4"/><path d="M4,4 H10 M4,6.5 H8" stroke="#3a70c0"/><path d="M5,13 H10 M7.5,10 V13" stroke="#3a70c0" stroke-width="1.4"/></svg>
<svg class="a" style="left:1893px;top:240px;" width="16" height="15" viewBox="0 0 16 15"><rect x="1" y="2" width="13" height="8" fill="#d0e0f0" stroke="#6a8ab0"/><rect x="1" y="2" width="8" height="3" fill="#60b060"/><circle cx="11" cy="11" r="4" fill="#40b040"/><path d="M10,9 L13,11 L10,13Z" fill="#fff"/></svg>
<div class="t" style="left:4px;top:1128.0px;font-size:15px;line-height:18.0px;color:#4a4a4a;font-weight:normal;">Synchronized diagram</div>
<div class="a" style="left:1600px;top:1131px;width:2px;height:15px;background:repeating-linear-gradient(#aaa 0 2px,transparent 2px 4px)"></div></body></html>
